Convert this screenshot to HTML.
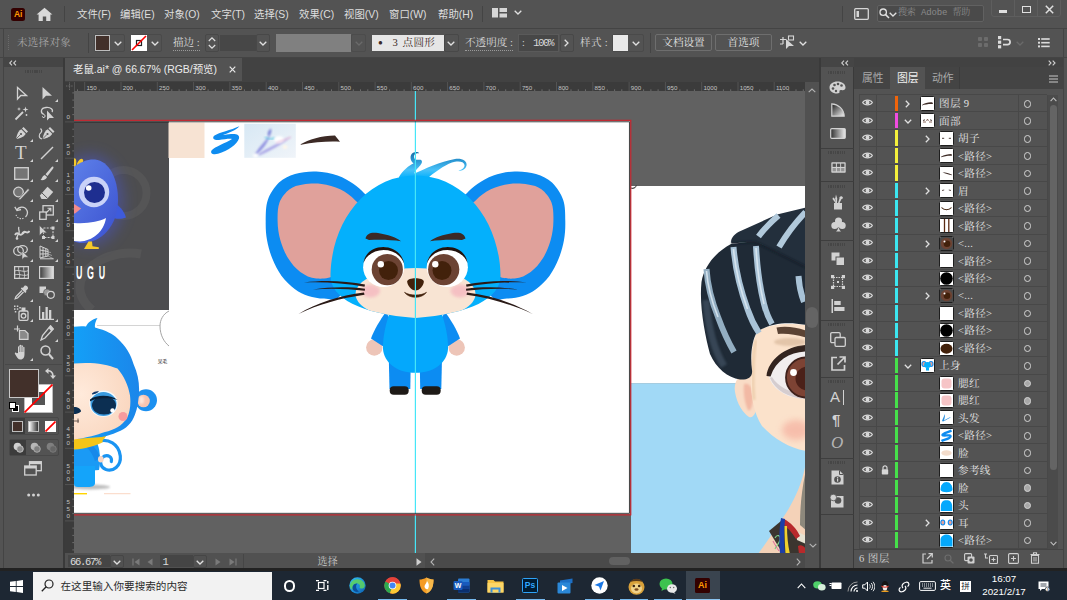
<!DOCTYPE html>
<html lang="zh-CN">
<head>
<meta charset="utf-8">
<title>老鼠.ai</title>
<style>
*{box-sizing:border-box;margin:0;padding:0}
html,body{width:1067px;height:600px;overflow:hidden;background:#535353}
body{font-family:"Liberation Sans","Noto Sans CJK SC",sans-serif;color:#d6d6d6;font-size:11px;position:relative}
.abs{position:absolute}
#app{position:absolute;left:0;top:0;width:1067px;height:571px;background:#535353;overflow:hidden}
#menubar{position:absolute;left:0;top:0;width:1067px;height:28px;background:#535353}
#ctrlbar{position:absolute;left:4px;top:29px;width:1059px;height:28px;background:#535353}
#tabbar{position:absolute;left:65px;top:58px;width:754px;height:24px;background:#424242}
#tab{position:absolute;left:0;top:0;width:177px;height:23px;background:#535353}
#hruler{position:absolute;left:65px;top:82px;width:740px;height:9px;background:#3b3b3b;overflow:hidden}
#vruler{position:absolute;left:65px;top:91px;width:9px;height:462px;background:#3b3b3b}
#canvas{position:absolute;left:74px;top:91px;width:731px;height:462px;background:#616161;overflow:hidden}
#vscroll{position:absolute;left:805px;top:82px;width:14px;height:471px;background:#515151}
#statusbar{position:absolute;left:65px;top:553px;width:754px;height:15px;background:#515151}
#toolbar{position:absolute;left:4px;top:58px;width:59px;height:510px;background:#535353}
#iconstrip{position:absolute;left:821px;top:58px;width:32px;height:511px;background:#535353}
#panel{position:absolute;left:854px;top:58px;width:209px;height:511px;background:#535353}
#taskbar{position:absolute;left:0;top:571px;width:1067px;height:29px;background:#1d2733}

.mi{position:absolute;top:7.600px;height:14px;line-height:14px;font-size:10.4px;color:#dedede;white-space:nowrap}
.sep{position:absolute;width:1px;background:#444}
.serif{font-family:"Liberation Serif","Noto Serif CJK SC",serif}
.ct{position:absolute;top:7px;height:14px;line-height:14px;font-size:10.6px;color:#d8d8d8;white-space:nowrap;font-family:"Liberation Serif","Noto Serif CJK SC",serif}
.chev{position:absolute;width:7px;height:4px}
.dd{position:absolute;top:5px;height:18px;border:1px solid #484848;border-radius:2px}

#panel .row{position:absolute;left:5px;width:188px;height:17.470px;border-bottom:1px solid #484848}
#panel .eye{position:absolute;left:3px;top:4.400px}
#panel .cb{position:absolute;left:36px;top:0.500px;width:3px;height:15.500px}
#panel .th{position:absolute;top:1px;width:15px;height:15px;background:#fff;border:1px solid #1e1e1e;border-radius:1.500px;overflow:hidden}
#panel .nm{position:absolute;top:2.300px;height:14px;line-height:14px;font-size:10.600px;color:#e4e4e4;white-space:nowrap;font-family:"Liberation Serif","Noto Serif CJK SC",serif;letter-spacing:0.300px}
#panel .tg{position:absolute;left:164.800px;top:5px;width:7.600px;height:7.600px;border:1.200px solid #d4d4d4;border-radius:50%}
#panel .tg.f{background:#a8a8a8}
#panel .cv{position:absolute;top:5px}
</style>
</head>
<body>
<div id="app">
  <div class="abs" style="left:0;top:28px;width:1067px;height:1px;background:#444"></div>
  <div class="abs" style="left:0;top:57px;width:1067px;height:1px;background:#444"></div>
  <div class="abs" style="left:3px;top:28px;width:1px;height:543px;background:#444"></div>
  <div class="abs" style="left:1063px;top:28px;width:1px;height:543px;background:#444"></div>

  <div id="menubar">
    <div class="abs" style="left:11px;top:8px;width:14px;height:13px;background:#300;border-radius:2.5px;color:#ff9a00;font-size:8.5px;font-weight:bold;line-height:13px;text-align:center;letter-spacing:-0.3px">Ai</div>
    <svg class="abs" style="left:36px;top:7px" width="17" height="15" viewBox="0 0 17 15"><path d="M8.5 0.8 L0.6 7.6 L2.6 7.6 L2.6 14 L6.8 14 L6.8 9.6 L10.2 9.6 L10.2 14 L14.4 14 L14.4 7.6 L16.4 7.6 Z" fill="#d9d9d9"/></svg>
    <div class="sep" style="left:64px;top:6px;height:16px"></div>
    <div class="mi" style="left:77px">文件(F)</div>
    <div class="mi" style="left:120px">编辑(E)</div>
    <div class="mi" style="left:164px">对象(O)</div>
    <div class="mi" style="left:211px">文字(T)</div>
    <div class="mi" style="left:254px">选择(S)</div>
    <div class="mi" style="left:299px">效果(C)</div>
    <div class="mi" style="left:344px">视图(V)</div>
    <div class="mi" style="left:389px">窗口(W)</div>
    <div class="mi" style="left:438px">帮助(H)</div>
    <div class="sep" style="left:482px;top:6px;height:16px"></div>
    <svg class="abs" style="left:492px;top:8px" width="16" height="10" viewBox="0 0 16 10"><rect x="0" y="0" width="6" height="9.5" fill="#d6d6d6"/><rect x="7.5" y="0" width="7.5" height="4" fill="#d6d6d6"/><rect x="7.5" y="5.5" width="7.5" height="4" fill="#d6d6d6"/></svg>
    <svg class="abs" style="left:514px;top:10px" width="8" height="5" viewBox="0 0 8 5"><path d="M0.7 0.7 L4 4 L7.3 0.7" fill="none" stroke="#e0e0e0" stroke-width="1.3"/></svg>
    <div class="sep" style="left:842px;top:6px;height:16px"></div>
    <svg class="abs" style="left:854px;top:8px" width="15" height="12" viewBox="0 0 15 12"><rect x="0.7" y="0.7" width="13.6" height="10.6" rx="1" fill="none" stroke="#d6d6d6" stroke-width="1.3"/><rect x="2.5" y="3" width="2.5" height="6" fill="#d6d6d6"/></svg>
    <div class="abs" style="left:877px;top:5px;width:107px;height:17px;background:#4a4a4a;border:1px solid #616161;border-radius:2px"></div>
    <svg class="abs" style="left:879px;top:8px" width="11" height="11" viewBox="0 0 11 11"><circle cx="4.2" cy="4.2" r="3.2" fill="none" stroke="#e0e0e0" stroke-width="1.3"/><path d="M6.6 6.6 L10 10" stroke="#e0e0e0" stroke-width="1.5"/></svg>
    <svg class="abs" style="left:889px;top:12px" width="8" height="5" viewBox="0 0 8 5"><path d="M0.7 0.7 L4 4 L7.3 0.7" fill="none" stroke="#e0e0e0" stroke-width="1.3"/></svg>
    <div class="abs" style="left:898px;top:6px;height:14px;line-height:14px;font-size:9px;color:#8a8a8a;white-space:nowrap;font-family:'Liberation Mono','Noto Serif CJK SC',monospace;letter-spacing:-0.150px">搜索 Adobe 帮助</div>
    <div class="abs" style="left:991px;top:-2px;width:70px;height:19px;border:1px solid #5e5e5e;border-radius:3px"></div>
    <div class="abs" style="left:1014px;top:0;width:1px;height:16px;background:#5e5e5e"></div>
    <div class="abs" style="left:1037px;top:0;width:1px;height:16px;background:#5e5e5e"></div>
    <div class="abs" style="left:999px;top:10px;width:8px;height:2.5px;background:#e0e0e0"></div>
    <div class="abs" style="left:1022px;top:6px;width:9px;height:7px;border:1.6px solid #e0e0e0"></div>
    <svg class="abs" style="left:1045px;top:5px" width="9" height="9" viewBox="0 0 9 9"><path d="M0.8 0.8 L8.2 8.2 M8.2 0.8 L0.8 8.2" stroke="#e0e0e0" stroke-width="1.5"/></svg>
  </div>

  <div id="ctrlbar">
    <div class="abs" style="left:4px;top:6px;width:1px;height:15px;border-left:1px dotted #6a6a6a"></div>
    <div class="ct" style="left:13px;color:#a6a6a6;letter-spacing:0.2px">未选择对象</div>
    <div class="sep" style="left:84px;top:4px;height:20px"></div>
    <div class="abs" style="left:90px;top:5px;width:31px;height:18px;border:1px solid #4a4a4a;border-radius:2px"></div>
    <div class="abs" style="left:91px;top:6px;width:15px;height:16px;background:#42302a;border:1px solid #bdbdbd"></div>
    <svg class="abs" style="left:110px;top:12px" width="8" height="5" viewBox="0 0 8 5"><path d="M0.7 0.7 L4 4 L7.3 0.7" fill="none" stroke="#e0e0e0" stroke-width="1.3"/></svg>
    <div class="abs" style="left:127px;top:5px;width:31px;height:18px;border:1px solid #4a4a4a;border-radius:2px"></div>
    <svg class="abs" style="left:127px;top:6px" width="16" height="16" viewBox="0 0 16 16"><rect width="16" height="16" fill="#fff"/><rect x="5.5" y="5.5" width="5" height="5" fill="none" stroke="#222" stroke-width="1.2"/><path d="M1 15 L15 1" stroke="#f00" stroke-width="1.6"/></svg>
    <svg class="abs" style="left:147px;top:12px" width="8" height="5" viewBox="0 0 8 5"><path d="M0.7 0.7 L4 4 L7.3 0.7" fill="none" stroke="#e0e0e0" stroke-width="1.3"/></svg>
    <div class="ct" style="left:169px;border-bottom:1px dotted #9a9a9a;height:15px">描边 :</div>
    <div class="abs" style="left:201px;top:5px;width:14px;height:18px;border:1px solid #484848;border-radius:2px"></div>
    <svg class="abs" style="left:204px;top:8px" width="8" height="12" viewBox="0 0 8 12"><path d="M0.8 4 L4 0.9 L7.2 4 M0.8 8 L4 11.1 L7.2 8" fill="none" stroke="#e0e0e0" stroke-width="1.2"/></svg>
    <div class="abs" style="left:216px;top:6px;width:36px;height:16px;background:#474747"></div>
    <div class="abs" style="left:252px;top:5px;width:14px;height:18px;border:1px solid #484848;border-radius:2px"></div>
    <svg class="abs" style="left:255px;top:12px" width="8" height="5" viewBox="0 0 8 5"><path d="M0.7 0.7 L4 4 L7.3 0.7" fill="none" stroke="#e0e0e0" stroke-width="1.3"/></svg>
    <div class="abs" style="left:272px;top:5px;width:75px;height:18px;background:#808080"></div>
    <div class="abs" style="left:347px;top:5px;width:15px;height:18px;border:1px solid #4c4c4c;border-radius:2px"></div>
    <svg class="abs" style="left:351px;top:12px" width="8" height="5" viewBox="0 0 8 5"><path d="M0.7 0.7 L4 4 L7.3 0.7" fill="none" stroke="#6a6a6a" stroke-width="1.3"/></svg>
    <div class="abs" style="left:368px;top:6px;width:72px;height:16px;background:#e6e6e6"></div>
    <div class="ct" style="left:374px;color:#3a2a25"><span style="font-size:8px;position:relative;top:-1px">●</span></div><div class="ct" style="left:388.500px;color:#3a2a25">3</div><div class="ct" style="left:398.500px;color:#3a2a25;letter-spacing:0.300px">点圆形</div>
    <div class="abs" style="left:440px;top:5px;width:15px;height:18px;border:1px solid #484848;border-radius:2px"></div>
    <svg class="abs" style="left:443px;top:12px" width="8" height="5" viewBox="0 0 8 5"><path d="M0.7 0.7 L4 4 L7.3 0.7" fill="none" stroke="#e0e0e0" stroke-width="1.3"/></svg>
    <div class="ct" style="left:461px;border-bottom:1px dotted #9a9a9a;height:15px">不透明度 :</div>
    <div class="abs" style="left:514px;top:5px;width:41px;height:18px;background:#474747;border:1px solid #5a5a5a"></div>
    <div class="ct" style="left:518px;font-size:10px">:</div>
    <div class="ct" style="left:529px;font-size:10.800px;font-family:'Liberation Mono',monospace;letter-spacing:-1.500px">100%</div>
    <div class="abs" style="left:556px;top:5px;width:14px;height:18px;border:1px solid #484848;border-radius:2px"></div>
    <svg class="abs" style="left:560px;top:10px" width="5" height="8" viewBox="0 0 5 8"><path d="M0.7 0.7 L4 4 L0.7 7.3" fill="none" stroke="#e0e0e0" stroke-width="1.3"/></svg>
    <div class="ct" style="left:576px;letter-spacing:0.3px">样式 :</div>
    <div class="abs" style="left:608px;top:5px;width:32px;height:18px;border:1px solid #4a4a4a;border-radius:2px"></div>
    <div class="abs" style="left:609px;top:6px;width:15px;height:16px;background:#e9e9e9"></div>
    <svg class="abs" style="left:628px;top:12px" width="8" height="5" viewBox="0 0 8 5"><path d="M0.7 0.7 L4 4 L7.3 0.7" fill="none" stroke="#e0e0e0" stroke-width="1.3"/></svg>
    <div class="sep" style="left:646px;top:4px;height:20px"></div>
    <div class="abs serif" style="left:651px;top:5px;width:57px;height:17px;border:1px solid #6e6e6e;border-radius:2px;text-align:center;line-height:15px;font-size:10.6px;color:#e4e4e4">文档设置</div>
    <div class="abs serif" style="left:711px;top:5px;width:57px;height:17px;border:1px solid #6e6e6e;border-radius:2px;text-align:center;line-height:15px;font-size:10.6px;color:#e4e4e4">首选项</div>
    <svg class="abs" style="left:776px;top:6px" width="16" height="15" viewBox="0 0 16 15"><path d="M0 4.5 H6 M3 2 V9 M0 9 H3" stroke="#d6d6d6" stroke-width="1.2" fill="none"/><rect x="8.5" y="1" width="5" height="4" fill="none" stroke="#d6d6d6" stroke-width="1.1"/><path d="M6 4 L6 14 L9 11 L14 11 Z" fill="#d6d6d6"/></svg>
    <svg class="abs" style="left:795px;top:12px" width="8" height="5" viewBox="0 0 8 5"><path d="M0.7 0.7 L4 4 L7.3 0.7" fill="none" stroke="#e0e0e0" stroke-width="1.3"/></svg>
    <svg class="abs" style="left:974px;top:8px" width="11" height="11" viewBox="0 0 11 11"><g fill="#6c6c6c"><rect x="0" y="0" width="4" height="4" rx="1"/><rect x="6" y="0" width="4" height="4" rx="1"/><rect x="0" y="6" width="4" height="4" rx="1"/><rect x="6" y="6" width="4" height="4" rx="1"/></g></svg>
    <svg class="abs" style="left:994px;top:7px" width="14" height="13" viewBox="0 0 14 13"><g fill="#dcdcdc"><rect x="0" y="0" width="3.2" height="3.2"/><rect x="0" y="4.6" width="3.2" height="3.2"/><rect x="0" y="9.2" width="3.2" height="3.2"/></g><path d="M5 3.5 H9.5 A2.6 2.6 0 0 1 9.5 8.7 H5" fill="none" stroke="#dcdcdc" stroke-width="1.7"/></svg>
    <svg class="abs" style="left:1012px;top:12px" width="8" height="5" viewBox="0 0 8 5"><path d="M0.7 0.7 L4 4 L7.3 0.7" fill="none" stroke="#6a6a6a" stroke-width="1.3"/></svg>
    <svg class="abs" style="left:1034px;top:9px" width="12" height="10" viewBox="0 0 12 10"><g fill="#dcdcdc"><rect x="0" y="0" width="2" height="2"/><rect x="3.2" y="0.2" width="8.5" height="1.6"/><rect x="0" y="3.7" width="2" height="2"/><rect x="3.2" y="3.9" width="8.5" height="1.6"/><rect x="0" y="7.4" width="2" height="2"/><rect x="3.2" y="7.6" width="8.5" height="1.6"/></g></svg>
  </div>
  <div id="toolbar">
    <div class="abs" style="left:0;top:0;width:59px;height:9px;background:#454545"></div>
    <svg class="abs" style="left:5px;top:2px" width="9" height="6" viewBox="0 0 9 6"><path d="M3 0.700 L0.700 3 L3 5.300 M7 0.700 L4.700 3 L7 5.300" fill="none" stroke="#d0d0d0" stroke-width="1.100"/></svg>
    <div class="abs" style="left:21px;top:12px;width:17px;height:3px;background:repeating-linear-gradient(90deg,#464646 0 1.300px,transparent 1.300px 2.300px)"></div>
    <svg class="abs" style="left:11.5px;top:27.8px" width="12" height="15" viewBox="0 0 12 15"><path d="M1.500 1.500 L1.500 13 L4.800 9.500 L10.500 9.500 Z" fill="none" stroke="#d2d2d2" stroke-width="1.300" stroke-linejoin="miter"/></svg>
    <svg class="abs" style="left:36.5px;top:27.8px" width="12" height="15" viewBox="0 0 12 15"><path d="M1.500 1 L1.500 13.500 L5 9.800 L11 9.800 Z" fill="#d2d2d2"/></svg>
    <svg class="abs" style="left:50.5px;top:41.3px" width="3" height="3" viewBox="0 0 3 3"><path d="M3 0 V3 H0 Z" fill="#d2d2d2"/></svg>
    <svg class="abs" style="left:10.0px;top:47.7px" width="15" height="15" viewBox="0 0 15 15"><path d="M1.500 13.500 L9 6" stroke="#d2d2d2" stroke-width="1.800" fill="none"/><path d="M11.500 0.500 L12.200 2.800 L14.500 3.500 L12.200 4.200 L11.500 6.500 L10.800 4.200 L8.500 3.500 L10.800 2.800 Z" fill="#d2d2d2"/><path d="M5 1 L5.500 2.500 L7 3 L5.500 3.500 L5 5 L4.500 3.500 L3 3 L4.500 2.500 Z" fill="#d2d2d2"/><circle cx="12.500" cy="9" r="0.900" fill="#d2d2d2"/></svg>
    <svg class="abs" style="left:34.5px;top:47.7px" width="16" height="15" viewBox="0 0 16 15"><path d="M5 8.500 C 1 7, 1.500 2, 7 1.500 C 12 1, 14.500 4, 13 6" fill="none" stroke="#d2d2d2" stroke-width="1.300"/><path d="M5 8.500 C 6.500 9, 6.500 11, 5 11.500 C 3.500 12, 3 10.500, 4 10" fill="none" stroke="#d2d2d2" stroke-width="1"/><path d="M8 4.500 L8 14.500 L10.500 12 L15 12 Z" fill="#d2d2d2"/></svg>
    <svg class="abs" style="left:10.5px;top:68.2px" width="14" height="14" viewBox="0 0 14 14"><path d="M8.500 1 L13 5.500 L11.500 7 L7 2.500 Z" fill="#d2d2d2"/><path d="M6.300 3.300 L10.700 7.700 C 9.500 10.500, 6 12, 1 13 C 2 8, 3.500 4.500, 6.300 3.300 Z" fill="#d2d2d2"/><circle cx="6" cy="8" r="1.100" fill="#535353"/><path d="M1 13 L5.300 8.700" stroke="#535353" stroke-width="0.800"/></svg>
    <svg class="abs" style="left:25.5px;top:81.2px" width="3" height="3" viewBox="0 0 3 3"><path d="M3 0 V3 H0 Z" fill="#d2d2d2"/></svg>
    <svg class="abs" style="left:34.0px;top:68.2px" width="17" height="14" viewBox="0 0 17 14"><g transform="translate(3.500,0)"><path d="M8.500 1 L13 5.500 L11.500 7 L7 2.500 Z" fill="#d2d2d2"/><path d="M6.300 3.300 L10.700 7.700 C 9.500 10.500, 6 12, 1 13 C 2 8, 3.500 4.500, 6.300 3.300 Z" fill="#d2d2d2"/><circle cx="6" cy="8" r="1.100" fill="#535353"/><path d="M1 13 L5.300 8.700" stroke="#535353" stroke-width="0.800"/></g><path d="M4 13 C 0 12, 1 8, 3 6.500 C 4.500 5, 3 3, 2.500 2.500" fill="none" stroke="#d2d2d2" stroke-width="1.100"/></svg>
    <div class="abs" style="left:11.0px;top:85.09px;font-family:'Liberation Serif',serif;font-size:19px;line-height:20px;color:#d2d2d2">T</div>
    <svg class="abs" style="left:25.5px;top:101.1px" width="3" height="3" viewBox="0 0 3 3"><path d="M3 0 V3 H0 Z" fill="#d2d2d2"/></svg>
    <svg class="abs" style="left:35.5px;top:88.1px" width="14" height="14" viewBox="0 0 14 14"><path d="M1 13 L13 1" stroke="#d2d2d2" stroke-width="1.500"/></svg>
    <svg class="abs" style="left:50.5px;top:101.1px" width="3" height="3" viewBox="0 0 3 3"><path d="M3 0 V3 H0 Z" fill="#d2d2d2"/></svg>
    <svg class="abs" style="left:10.0px;top:108.5px" width="15" height="13" viewBox="0 0 15 13"><rect x="0.700" y="0.700" width="13.600" height="11.600" fill="#747474" stroke="#d2d2d2" stroke-width="1.300"/></svg>
    <svg class="abs" style="left:25.5px;top:121.0px" width="3" height="3" viewBox="0 0 3 3"><path d="M3 0 V3 H0 Z" fill="#d2d2d2"/></svg>
    <svg class="abs" style="left:35.5px;top:107.5px" width="14" height="15" viewBox="0 0 14 15"><path d="M13 0.500 C 13.800 1.200, 13.500 2, 13 2.800 L 7.500 10 L 5.500 8.300 L 11.500 1.200 C 12 0.500, 12.500 0.200, 13 0.500 Z" fill="#d2d2d2"/><path d="M4.800 9 L7 11 C 6.500 13.500, 3.500 14.500, 0.500 14 C 2 13, 2 10, 4.800 9 Z" fill="#d2d2d2"/></svg>
    <svg class="abs" style="left:50.5px;top:121.0px" width="3" height="3" viewBox="0 0 3 3"><path d="M3 0 V3 H0 Z" fill="#d2d2d2"/></svg>
    <svg class="abs" style="left:9.0px;top:127.9px" width="17" height="14" viewBox="0 0 17 14"><circle cx="5.500" cy="6" r="4.800" fill="#747474" stroke="#d2d2d2" stroke-width="1.300"/><path d="M6 12.500 L15 2.500 L16.500 4 L7.500 13.500 L5.500 14 Z" fill="#d2d2d2" stroke="#535353" stroke-width="0.600"/></svg>
    <svg class="abs" style="left:25.5px;top:140.9px" width="3" height="3" viewBox="0 0 3 3"><path d="M3 0 V3 H0 Z" fill="#d2d2d2"/></svg>
    <svg class="abs" style="left:35.0px;top:127.9px" width="15" height="14" viewBox="0 0 15 14"><path d="M8.500 0.800 L14.200 6 L8 13 L2.500 13 L0.800 9.500 Z" fill="#d2d2d2"/><path d="M3 7 L8.500 12.300" stroke="#535353" stroke-width="1"/></svg>
    <svg class="abs" style="left:50.5px;top:140.9px" width="3" height="3" viewBox="0 0 3 3"><path d="M3 0 V3 H0 Z" fill="#d2d2d2"/></svg>
    <svg class="abs" style="left:10.0px;top:147.4px" width="15" height="15" viewBox="0 0 15 15"><path d="M3 5 C 5 1, 11 1, 13 5.500 C 14 8, 13 10.500, 11.500 12" fill="none" stroke="#d2d2d2" stroke-width="1.300"/><path d="M0.800 1.800 L3 5.600 L7 4.500" fill="none" stroke="#d2d2d2" stroke-width="1.300"/><path d="M9.500 13.300 C 6 14.500, 2.500 12.500, 1.800 9" fill="none" stroke="#d2d2d2" stroke-width="1.100" stroke-dasharray="1.300 1.300"/></svg>
    <svg class="abs" style="left:25.5px;top:160.9px" width="3" height="3" viewBox="0 0 3 3"><path d="M3 0 V3 H0 Z" fill="#d2d2d2"/></svg>
    <svg class="abs" style="left:35.0px;top:147.4px" width="15" height="15" viewBox="0 0 15 15"><rect x="4" y="0.700" width="10.300" height="9.300" fill="none" stroke="#d2d2d2" stroke-width="1.300"/><rect x="0.700" y="7" width="6.500" height="7.300" fill="#535353" stroke="#d2d2d2" stroke-width="1.300"/><path d="M7 8 L11.500 3.500 M8.500 3.200 H11.800 V6.500" fill="none" stroke="#d2d2d2" stroke-width="1.100"/></svg>
    <svg class="abs" style="left:50.5px;top:160.9px" width="3" height="3" viewBox="0 0 3 3"><path d="M3 0 V3 H0 Z" fill="#d2d2d2"/></svg>
    <svg class="abs" style="left:9.5px;top:167.8px" width="16" height="14" viewBox="0 0 16 14"><path d="M1 9 C 4 4, 6 12, 9 7 C 11 3.500, 13 9, 15.500 5" fill="none" stroke="#d2d2d2" stroke-width="2"/><path d="M5 1 C 3.500 3, 6 4.500, 5 7 C 4 9.500, 2 11, 3 13" fill="none" stroke="#d2d2d2" stroke-width="1.300"/><circle cx="3" cy="12.500" r="1.300" fill="#d2d2d2"/><circle cx="9" cy="7" r="1.300" fill="#d2d2d2"/></svg>
    <svg class="abs" style="left:25.5px;top:180.8px" width="3" height="3" viewBox="0 0 3 3"><path d="M3 0 V3 H0 Z" fill="#d2d2d2"/></svg>
    <svg class="abs" style="left:34.5px;top:167.3px" width="16" height="15" viewBox="0 0 16 15"><rect x="4.500" y="3" width="9.500" height="9.500" fill="none" stroke="#d2d2d2" stroke-width="1.100" stroke-dasharray="2 1.200"/><g fill="#d2d2d2"><rect x="12.500" y="1.500" width="3" height="3"/><rect x="12.500" y="11" width="3" height="3"/><rect x="3" y="11" width="3" height="3"/></g><path d="M0.500 0.500 L0.500 10.500 L3.300 7.800 L8 7.800 Z" fill="#d2d2d2" stroke="#535353" stroke-width="0.500"/></svg>
    <svg class="abs" style="left:50.5px;top:180.8px" width="3" height="3" viewBox="0 0 3 3"><path d="M3 0 V3 H0 Z" fill="#d2d2d2"/></svg>
    <svg class="abs" style="left:9.0px;top:187.2px" width="17" height="15" viewBox="0 0 17 15"><ellipse cx="5.500" cy="6" rx="4.800" ry="4.300" fill="none" stroke="#d2d2d2" stroke-width="1.300"/><ellipse cx="9.500" cy="4.500" rx="4.800" ry="3.800" fill="none" stroke="#d2d2d2" stroke-width="1.300"/><path d="M9 6 L9 14.500 L11.300 12.200 L15.500 12.200 Z" fill="#d2d2d2" stroke="#535353" stroke-width="0.500"/></svg>
    <svg class="abs" style="left:25.5px;top:200.7px" width="3" height="3" viewBox="0 0 3 3"><path d="M3 0 V3 H0 Z" fill="#d2d2d2"/></svg>
    <svg class="abs" style="left:35.0px;top:187.2px" width="15" height="15" viewBox="0 0 15 15"><path d="M1 1 V13 L9 11 V4.500 Z M1 5 L9 6.500 M1 9 L9 8.800 M4 2.300 V12.200 M6.800 3.500 V11.500" fill="none" stroke="#d2d2d2" stroke-width="1"/><path d="M9 11 L14.500 13.800 M9 9 L13 10.500 M9 7 L12 7.500" stroke="#d2d2d2" stroke-width="0.800" opacity="0.700"/><path d="M1 13.800 H14.500" stroke="#d2d2d2" stroke-width="1"/></svg>
    <svg class="abs" style="left:50.5px;top:200.7px" width="3" height="3" viewBox="0 0 3 3"><path d="M3 0 V3 H0 Z" fill="#d2d2d2"/></svg>
    <svg class="abs" style="left:10.0px;top:208.2px" width="15" height="13" viewBox="0 0 15 13"><rect x="0.600" y="0.600" width="13.800" height="11.800" fill="none" stroke="#d2d2d2" stroke-width="1.300"/><path d="M0.600 5 C 5 3, 10 7, 14.400 4.500 M0.600 9 C 5 7, 10 11, 14.400 8.500 M5 0.600 C 3.500 4, 7 8, 5 12.400 M10 0.600 C 8.500 4, 12 8, 10 12.400" fill="none" stroke="#d2d2d2" stroke-width="0.900"/></svg>
    <svg class="abs" style="left:35.0px;top:208.2px" width="15" height="13" viewBox="0 0 15 13"><defs><linearGradient id="tbg" x1="0" y1="0" x2="1" y2="0"><stop offset="0" stop-color="#3a3a3a"/><stop offset="1" stop-color="#e6e6e6"/></linearGradient></defs><rect x="0.600" y="0.600" width="13.800" height="11.800" fill="url(#tbg)" stroke="#d2d2d2" stroke-width="1.200"/></svg>
    <svg class="abs" style="left:10.0px;top:227.1px" width="15" height="15" viewBox="0 0 15 15"><path d="M10.500 0.800 C 12 -0.300, 14.800 2, 13.800 4 L 11.800 6 L 12.500 6.800 L 11.300 8 L 6.800 3.500 L 8 2.300 L 8.800 3 Z" fill="#d2d2d2"/><path d="M8 5.500 L2 11.500 L1.200 13.800 L3.500 13 L9.500 7" fill="none" stroke="#d2d2d2" stroke-width="1.300"/></svg>
    <svg class="abs" style="left:25.5px;top:240.6px" width="3" height="3" viewBox="0 0 3 3"><path d="M3 0 V3 H0 Z" fill="#d2d2d2"/></svg>
    <svg class="abs" style="left:34.5px;top:228.1px" width="16" height="13" viewBox="0 0 16 13"><rect x="0.500" y="0.500" width="6.500" height="6.500" fill="#d2d2d2"/><circle cx="8" cy="6.500" r="3.500" fill="#9a9a9a" stroke="#535353" stroke-width="0.600"/><circle cx="11.800" cy="8.800" r="3.500" fill="#535353" stroke="#d2d2d2" stroke-width="1.200"/></svg>
    <svg class="abs" style="left:10.0px;top:246.5px" width="15" height="16" viewBox="0 0 15 16"><rect x="5" y="6" width="9" height="9.300" rx="1.200" fill="none" stroke="#d2d2d2" stroke-width="1.300"/><rect x="7.500" y="2.500" width="4" height="3.500" fill="#d2d2d2"/><circle cx="9.500" cy="10.800" r="2.300" fill="none" stroke="#d2d2d2" stroke-width="1.300"/><g fill="#d2d2d2"><rect x="0" y="0.500" width="1.500" height="1.500"/><rect x="2.800" y="0.500" width="1.500" height="1.500"/><rect x="0" y="3.300" width="1.500" height="1.500"/><rect x="2.800" y="3.300" width="1.500" height="1.500"/><rect x="5.300" y="2" width="1.500" height="1.500"/><rect x="0.800" y="6" width="1.500" height="1.500"/></g></svg>
    <svg class="abs" style="left:25.5px;top:260.5px" width="3" height="3" viewBox="0 0 3 3"><path d="M3 0 V3 H0 Z" fill="#d2d2d2"/></svg>
    <svg class="abs" style="left:35.0px;top:247.5px" width="15" height="14" viewBox="0 0 15 14"><path d="M0.600 0 V13.400 H15" fill="none" stroke="#d2d2d2" stroke-width="1.300"/><g fill="#d2d2d2"><rect x="3" y="6" width="2.300" height="7"/><rect x="6.500" y="1" width="2.300" height="12"/><rect x="10" y="4" width="2.300" height="9"/></g></svg>
    <svg class="abs" style="left:50.5px;top:260.5px" width="3" height="3" viewBox="0 0 3 3"><path d="M3 0 V3 H0 Z" fill="#d2d2d2"/></svg>
    <svg class="abs" style="left:10.0px;top:267.0px" width="15" height="15" viewBox="0 0 15 15"><path d="M0 4 H6 M3.500 0.500 V6.500" stroke="#d2d2d2" stroke-width="1.200"/><path d="M5.500 5.500 H11 L14 8.500 V14.300 H5.500 Z" fill="#8a8a8a" stroke="#d2d2d2" stroke-width="1.200"/></svg>
    <svg class="abs" style="left:35.5px;top:266.5px" width="14" height="16" viewBox="0 0 14 16"><path d="M10.500 0.800 L13.300 4 L5 13 L1 15 L2.500 10.500 Z" fill="none" stroke="#d2d2d2" stroke-width="1.300"/><path d="M8.500 3 L11.300 6.200 L13.300 4 L10.500 0.800 Z" fill="#d2d2d2"/></svg>
    <svg class="abs" style="left:50.5px;top:280.5px" width="3" height="3" viewBox="0 0 3 3"><path d="M3 0 V3 H0 Z" fill="#d2d2d2"/></svg>
    <svg class="abs" style="left:10.0px;top:286.4px" width="15" height="16" viewBox="0 0 15 16"><path d="M4 9 V3 C 4 2, 5.500 2, 5.500 3 V7 V1.500 C 5.500 0.500, 7.200 0.500, 7.200 1.500 V7 V2 C 7.200 1, 8.900 1, 8.900 2 V7.500 V3.500 C 8.900 2.500, 10.500 2.500, 10.500 3.500 V10 C 10.500 13, 9.500 15.500, 6.500 15.500 C 4 15.500, 3 13.500, 1 10 C 0.300 8.500, 2 8, 2.800 9.300 Z" fill="#d2d2d2"/><path d="M5.500 3 V8 M7.200 2 V8 M8.900 3 V8" stroke="#535353" stroke-width="0.500"/></svg>
    <svg class="abs" style="left:25.5px;top:300.4px" width="3" height="3" viewBox="0 0 3 3"><path d="M3 0 V3 H0 Z" fill="#d2d2d2"/></svg>
    <svg class="abs" style="left:35.5px;top:286.9px" width="14" height="15" viewBox="0 0 14 15"><circle cx="5.500" cy="5.500" r="4.500" fill="none" stroke="#d2d2d2" stroke-width="1.500"/><path d="M8.800 9 L13 14" stroke="#d2d2d2" stroke-width="2"/></svg>
    <div class="abs" style="left:1px;top:306px;width:57px;height:1px;background:#484848"></div>
    <div class="abs" style="left:20px;top:326px;width:29px;height:29px;background:#fff;border:1px solid #bdbdbd"></div>
    <div class="abs" style="left:28px;top:334px;width:13px;height:13px;background:#555"></div>
    <svg class="abs" style="left:20px;top:326px" width="29" height="29" viewBox="0 0 29 29"><path d="M0.500 28.500 L28.500 0.500" stroke="#f00" stroke-width="1.700"/></svg>
    <div class="abs" style="left:5px;top:311px;width:30px;height:29px;background:#42302a;border:1px solid #c8c8c8"></div>
    <svg class="abs" style="left:41px;top:310px" width="11" height="11" viewBox="0 0 11 11"><path d="M1.500 3 C 5 2, 8 4, 8 8" fill="none" stroke="#d2d2d2" stroke-width="1.700"/><path d="M0 3 L3.500 0 V6 Z M8 11 L5 7.500 H11 Z" fill="#d2d2d2"/></svg>
    <svg class="abs" style="left:5px;top:344px" width="10" height="10" viewBox="0 0 10 10"><rect x="3.500" y="3.500" width="6" height="6" fill="#000" stroke="#fff" stroke-width="1"/><rect x="0.500" y="0.500" width="6" height="6" fill="#fff" stroke="#000" stroke-width="1"/></svg>
    <div class="abs" style="left:5px;top:359px;width:50px;height:18px;border:1px solid #484848;border-radius:2px"></div>
    <div class="abs" style="left:6px;top:360px;width:15px;height:16px;background:#3c3c3c"></div>
    <div class="abs" style="left:8px;top:363px;width:11px;height:11px;background:#42302a;border:1px solid #bdbdbd"></div>
    <div class="abs" style="left:24px;top:363px;width:11px;height:11px;background:linear-gradient(90deg,#fff,#333);border:1px solid #bdbdbd"></div>
    <svg class="abs" style="left:41px;top:363px" width="11" height="11" viewBox="0 0 11 11"><rect width="11" height="11" fill="#fff"/><path d="M0.500 10.500 L10.500 0.500" stroke="#f00" stroke-width="1.700"/></svg>
    <div class="abs" style="left:5px;top:381px;width:50px;height:17px;border:1px solid #484848;border-radius:2px"></div>
    <div class="abs" style="left:6px;top:382px;width:16px;height:15px;background:#3c3c3c"></div>
    <svg class="abs" style="left:9px;top:384px;opacity:1" width="11" height="11" viewBox="0 0 11 11"><circle cx="4.500" cy="4.500" r="3.800" fill="#d2d2d2"/><circle cx="7" cy="7" r="3.300" fill="#8a8a8a" stroke="#d2d2d2" stroke-width="0.800"/></svg>
    <svg class="abs" style="left:26px;top:384px;opacity:0.8" width="11" height="11" viewBox="0 0 11 11"><circle cx="4.500" cy="4.500" r="3.800" fill="#d2d2d2"/><circle cx="7" cy="7" r="3.300" fill="#8a8a8a" stroke="#d2d2d2" stroke-width="0.800"/></svg>
    <svg class="abs" style="left:42px;top:384px;opacity:0.35" width="11" height="11" viewBox="0 0 11 11"><circle cx="4.500" cy="4.500" r="3.800" fill="#d2d2d2"/><circle cx="7" cy="7" r="3.300" fill="#8a8a8a" stroke="#d2d2d2" stroke-width="0.800"/></svg>
    <svg class="abs" style="left:20px;top:403px" width="18" height="15" viewBox="0 0 18 15"><rect x="5.500" y="0.700" width="11.800" height="9" fill="none" stroke="#d2d2d2" stroke-width="1.300"/><rect x="5.500" y="0.700" width="11.800" height="2.500" fill="#d2d2d2"/><rect x="0.700" y="5" width="11.500" height="9" fill="#535353" stroke="#d2d2d2" stroke-width="1.300"/><rect x="0.700" y="5" width="11.500" height="2.500" fill="#d2d2d2"/></svg>
    <svg class="abs" style="left:23px;top:435px" width="13" height="4" viewBox="0 0 13 4"><circle cx="1.700" cy="2" r="1.500" fill="#d2d2d2"/><circle cx="6.500" cy="2" r="1.500" fill="#d2d2d2"/><circle cx="11.300" cy="2" r="1.500" fill="#d2d2d2"/></svg>
  </div>
  <div id="tabbar"><div id="tab"><div class="abs" style="left:8px;top:4px;height:15px;line-height:15px;font-size:10.450px;color:#ececec;white-space:nowrap" id="tabtxt">老鼠.ai* @ 66.67% (RGB/预览)</div><svg class="abs" style="left:164px;top:8px" width="7" height="7" viewBox="0 0 7 7"><path d="M0.700 0.700 L6.300 6.300 M6.300 0.700 L0.700 6.300" stroke="#e8e8e8" stroke-width="1.200"/></svg></div></div>
  <div class="abs" style="left:63px;top:58px;width:2px;height:513px;background:#3a3a3a"></div>
  <div class="abs" style="left:819px;top:58px;width:2px;height:513px;background:#3a3a3a"></div>
  <div class="abs" style="left:853px;top:58px;width:1px;height:513px;background:#3a3a3a"></div>
  <div id="hruler"><svg class="abs" style="left:0;top:-1px" width="740" height="10" viewBox="65 81 740 10"><path d="M84.7 81.500 V91 M121.0 81.500 V91 M157.3 81.500 V91 M193.6 81.500 V91 M229.9 81.500 V91 M266.2 81.500 V91 M302.5 81.500 V91 M338.8 81.500 V91 M375.1 81.500 V91 M411.3 81.500 V91 M447.6 81.500 V91 M483.9 81.500 V91 M520.2 81.500 V91 M556.5 81.500 V91 M592.8 81.500 V91 M629.1 81.500 V91 M665.4 81.500 V91 M701.7 81.500 V91 M738.0 81.500 V91 M774.2 81.500 V91" stroke="#575757" stroke-width="0.900" fill="none"/><path d="M77.5 89.300 V91 M92.0 89.300 V91 M99.2 89.300 V91 M106.5 89.300 V91 M113.8 89.300 V91 M128.3 89.300 V91 M135.5 89.300 V91 M142.8 89.300 V91 M150.1 89.300 V91 M164.6 89.300 V91 M171.8 89.300 V91 M179.1 89.300 V91 M186.3 89.300 V91 M200.9 89.300 V91 M208.1 89.300 V91 M215.4 89.300 V91 M222.6 89.300 V91 M237.1 89.300 V91 M244.4 89.300 V91 M251.7 89.300 V91 M258.9 89.300 V91 M273.4 89.300 V91 M280.7 89.300 V91 M288.0 89.300 V91 M295.2 89.300 V91 M309.7 89.300 V91 M317.0 89.300 V91 M324.2 89.300 V91 M331.5 89.300 V91 M346.0 89.300 V91 M353.3 89.300 V91 M360.5 89.300 V91 M367.8 89.300 V91 M382.3 89.300 V91 M389.6 89.300 V91 M396.8 89.300 V91 M404.1 89.300 V91 M418.6 89.300 V91 M425.9 89.300 V91 M433.1 89.300 V91 M440.4 89.300 V91 M454.9 89.300 V91 M462.1 89.300 V91 M469.4 89.300 V91 M476.7 89.300 V91 M491.2 89.300 V91 M498.4 89.300 V91 M505.7 89.300 V91 M513.0 89.300 V91 M527.5 89.300 V91 M534.7 89.300 V91 M542.0 89.300 V91 M549.2 89.300 V91 M563.8 89.300 V91 M571.0 89.300 V91 M578.3 89.300 V91 M585.5 89.300 V91 M600.0 89.300 V91 M607.3 89.300 V91 M614.6 89.300 V91 M621.8 89.300 V91 M636.3 89.300 V91 M643.6 89.300 V91 M650.9 89.300 V91 M658.1 89.300 V91 M672.6 89.300 V91 M679.9 89.300 V91 M687.1 89.300 V91 M694.4 89.300 V91 M708.9 89.300 V91 M716.2 89.300 V91 M723.4 89.300 V91 M730.7 89.300 V91 M745.2 89.300 V91 M752.5 89.300 V91 M759.7 89.300 V91 M767.0 89.300 V91 M781.5 89.300 V91 M788.8 89.300 V91 M796.0 89.300 V91 M803.3 89.300 V91" stroke="#777" stroke-width="0.800" fill="none"/><path d="M74.500 81 V91" stroke="#575757" stroke-width="0.900"/><path d="M66 86 H73 M69.500 82.500 V90" stroke="#777" stroke-width="0.800" stroke-dasharray="1 0.600"/><text x="86.4" y="90" font-size="6.200" fill="#c2c2c2" font-family="Liberation Sans,sans-serif">150</text><text x="122.7" y="90" font-size="6.200" fill="#c2c2c2" font-family="Liberation Sans,sans-serif">200</text><text x="159.0" y="90" font-size="6.200" fill="#c2c2c2" font-family="Liberation Sans,sans-serif">250</text><text x="195.3" y="90" font-size="6.200" fill="#c2c2c2" font-family="Liberation Sans,sans-serif">300</text><text x="231.6" y="90" font-size="6.200" fill="#c2c2c2" font-family="Liberation Sans,sans-serif">350</text><text x="267.9" y="90" font-size="6.200" fill="#c2c2c2" font-family="Liberation Sans,sans-serif">400</text><text x="304.2" y="90" font-size="6.200" fill="#c2c2c2" font-family="Liberation Sans,sans-serif">450</text><text x="340.5" y="90" font-size="6.200" fill="#c2c2c2" font-family="Liberation Sans,sans-serif">500</text><text x="376.8" y="90" font-size="6.200" fill="#c2c2c2" font-family="Liberation Sans,sans-serif">550</text><text x="413.0" y="90" font-size="6.200" fill="#c2c2c2" font-family="Liberation Sans,sans-serif">600</text><text x="449.3" y="90" font-size="6.200" fill="#c2c2c2" font-family="Liberation Sans,sans-serif">650</text><text x="485.6" y="90" font-size="6.200" fill="#c2c2c2" font-family="Liberation Sans,sans-serif">700</text><text x="521.9" y="90" font-size="6.200" fill="#c2c2c2" font-family="Liberation Sans,sans-serif">750</text><text x="558.2" y="90" font-size="6.200" fill="#c2c2c2" font-family="Liberation Sans,sans-serif">800</text><text x="594.5" y="90" font-size="6.200" fill="#c2c2c2" font-family="Liberation Sans,sans-serif">850</text><text x="630.8" y="90" font-size="6.200" fill="#c2c2c2" font-family="Liberation Sans,sans-serif">900</text><text x="667.1" y="90" font-size="6.200" fill="#c2c2c2" font-family="Liberation Sans,sans-serif">950</text><text x="703.4" y="90" font-size="6.200" fill="#c2c2c2" font-family="Liberation Sans,sans-serif">1000</text><text x="739.7" y="90" font-size="6.200" fill="#c2c2c2" font-family="Liberation Sans,sans-serif">1050</text><text x="775.9" y="90" font-size="6.200" fill="#c2c2c2" font-family="Liberation Sans,sans-serif">1100</text></svg></div>
  <div id="vruler"><svg class="abs" style="left:0;top:0" width="9" height="462" viewBox="65 91 9 462"><path d="M65 121.9 H74 M65 158.2 H74 M65 194.4 H74 M65 230.7 H74 M65 267.0 H74 M65 303.2 H74 M65 339.5 H74 M65 375.8 H74 M65 412.1 H74 M65 448.3 H74 M65 484.6 H74 M65 520.9 H74" stroke="#575757" stroke-width="0.900" fill="none"/><path d="M72.300 92.9 H74 M72.300 100.1 H74 M72.300 107.4 H74 M72.300 114.6 H74 M72.300 129.2 H74 M72.300 136.4 H74 M72.300 143.7 H74 M72.300 150.9 H74 M72.300 165.4 H74 M72.300 172.7 H74 M72.300 179.9 H74 M72.300 187.2 H74 M72.300 201.7 H74 M72.300 208.9 H74 M72.300 216.2 H74 M72.300 223.5 H74 M72.300 238.0 H74 M72.300 245.2 H74 M72.300 252.5 H74 M72.300 259.7 H74 M72.300 274.2 H74 M72.300 281.5 H74 M72.300 288.7 H74 M72.300 296.0 H74 M72.300 310.5 H74 M72.300 317.8 H74 M72.300 325.0 H74 M72.300 332.3 H74 M72.300 346.8 H74 M72.300 354.0 H74 M72.300 361.3 H74 M72.300 368.5 H74 M72.300 383.0 H74 M72.300 390.3 H74 M72.300 397.6 H74 M72.300 404.8 H74 M72.300 419.3 H74 M72.300 426.6 H74 M72.300 433.8 H74 M72.300 441.1 H74 M72.300 455.6 H74 M72.300 462.8 H74 M72.300 470.1 H74 M72.300 477.3 H74 M72.300 491.9 H74 M72.300 499.1 H74 M72.300 506.4 H74 M72.300 513.6 H74 M72.300 528.1 H74 M72.300 535.4 H74 M72.300 542.6 H74 M72.300 549.9 H74" stroke="#777" stroke-width="0.800" fill="none"/><text x="66.400" y="118.5" font-size="6.200" fill="#c2c2c2" font-family="Liberation Sans,sans-serif">0</text><text x="66.400" y="148.0" font-size="6.200" fill="#c2c2c2" font-family="Liberation Sans,sans-serif">5</text><text x="66.400" y="154.8" font-size="6.200" fill="#c2c2c2" font-family="Liberation Sans,sans-serif">0</text><text x="66.400" y="177.4" font-size="6.200" fill="#c2c2c2" font-family="Liberation Sans,sans-serif">1</text><text x="66.400" y="184.2" font-size="6.200" fill="#c2c2c2" font-family="Liberation Sans,sans-serif">0</text><text x="66.400" y="191.0" font-size="6.200" fill="#c2c2c2" font-family="Liberation Sans,sans-serif">0</text><text x="66.400" y="213.7" font-size="6.200" fill="#c2c2c2" font-family="Liberation Sans,sans-serif">1</text><text x="66.400" y="220.5" font-size="6.200" fill="#c2c2c2" font-family="Liberation Sans,sans-serif">5</text><text x="66.400" y="227.3" font-size="6.200" fill="#c2c2c2" font-family="Liberation Sans,sans-serif">0</text><text x="66.400" y="250.0" font-size="6.200" fill="#c2c2c2" font-family="Liberation Sans,sans-serif">2</text><text x="66.400" y="256.8" font-size="6.200" fill="#c2c2c2" font-family="Liberation Sans,sans-serif">0</text><text x="66.400" y="263.6" font-size="6.200" fill="#c2c2c2" font-family="Liberation Sans,sans-serif">0</text><text x="66.400" y="286.2" font-size="6.200" fill="#c2c2c2" font-family="Liberation Sans,sans-serif">2</text><text x="66.400" y="293.1" font-size="6.200" fill="#c2c2c2" font-family="Liberation Sans,sans-serif">5</text><text x="66.400" y="299.9" font-size="6.200" fill="#c2c2c2" font-family="Liberation Sans,sans-serif">0</text><text x="66.400" y="322.5" font-size="6.200" fill="#c2c2c2" font-family="Liberation Sans,sans-serif">3</text><text x="66.400" y="329.3" font-size="6.200" fill="#c2c2c2" font-family="Liberation Sans,sans-serif">0</text><text x="66.400" y="336.1" font-size="6.200" fill="#c2c2c2" font-family="Liberation Sans,sans-serif">0</text><text x="66.400" y="358.8" font-size="6.200" fill="#c2c2c2" font-family="Liberation Sans,sans-serif">3</text><text x="66.400" y="365.6" font-size="6.200" fill="#c2c2c2" font-family="Liberation Sans,sans-serif">5</text><text x="66.400" y="372.4" font-size="6.200" fill="#c2c2c2" font-family="Liberation Sans,sans-serif">0</text><text x="66.400" y="395.1" font-size="6.200" fill="#c2c2c2" font-family="Liberation Sans,sans-serif">4</text><text x="66.400" y="401.9" font-size="6.200" fill="#c2c2c2" font-family="Liberation Sans,sans-serif">0</text><text x="66.400" y="408.7" font-size="6.200" fill="#c2c2c2" font-family="Liberation Sans,sans-serif">0</text><text x="66.400" y="431.3" font-size="6.200" fill="#c2c2c2" font-family="Liberation Sans,sans-serif">4</text><text x="66.400" y="438.1" font-size="6.200" fill="#c2c2c2" font-family="Liberation Sans,sans-serif">5</text><text x="66.400" y="444.9" font-size="6.200" fill="#c2c2c2" font-family="Liberation Sans,sans-serif">0</text><text x="66.400" y="467.6" font-size="6.200" fill="#c2c2c2" font-family="Liberation Sans,sans-serif">5</text><text x="66.400" y="474.4" font-size="6.200" fill="#c2c2c2" font-family="Liberation Sans,sans-serif">0</text><text x="66.400" y="481.2" font-size="6.200" fill="#c2c2c2" font-family="Liberation Sans,sans-serif">0</text><text x="66.400" y="503.9" font-size="6.200" fill="#c2c2c2" font-family="Liberation Sans,sans-serif">5</text><text x="66.400" y="510.7" font-size="6.200" fill="#c2c2c2" font-family="Liberation Sans,sans-serif">5</text><text x="66.400" y="517.5" font-size="6.200" fill="#c2c2c2" font-family="Liberation Sans,sans-serif">0</text></svg></div>
  <div id="canvas">
    <svg class="abs" style="left:0;top:0" width="731" height="462" viewBox="74 91 731 462">
      <defs>
        <clipPath id="headclip"><path id="headpath" d="M415.5 175.500 C 366 175.500, 331.500 222, 330.500 275 C 330 298, 360 314, 415.5 318 C 471 314, 501.500 298, 500.500 275 C 499.500 222, 465 175.500, 415.5 175.500 Z"/></clipPath>
        <linearGradient id="tuftg" gradientUnits="userSpaceOnUse" x1="0" y1="151" x2="0" y2="178"><stop offset="0" stop-color="#14689e"/><stop offset="0.350" stop-color="#2a96d2"/><stop offset="0.700" stop-color="#48c2f9"/><stop offset="1" stop-color="#04b0fc"/></linearGradient>
      </defs>
      <!-- artboard -->
      <rect x="60" y="121" width="570" height="393" fill="#ffffff"/>
      <!-- right image -->
      <g id="rightimg" clip-path="url(#rclip)">
        <rect x="631" y="186" width="174" height="197.500" fill="#ffffff"/>
        <rect x="631" y="383.300" width="174" height="170" fill="#a1d9f6"/>
        <!-- arm / body -->
        <path d="M806 462 C 803 480, 797 495, 788 510 C 780 522, 770 538, 758 554 L 806 554 Z" fill="#f4d2b8"/>
        <path d="M806 470 C 802 488, 800 505, 800 525 L 806 530 Z" fill="#8d887c"/>
        <path d="M769 531 L 781 521 L 806 538 L 806 554 L 783 554 Z" fill="#3b352f"/>
        <path d="M796 531 L 806 536 L 806 544 L 797 540 Z" fill="#e6e2d2"/>
        <path d="M775 538 C 777 534, 781 535, 780 540 C 779 544, 776 546, 775 549" fill="none" stroke="#7fd08a" stroke-width="1.200"/>
        <path d="M773 541 C 775 545, 777 548, 779 551" fill="none" stroke="#e06a9a" stroke-width="1"/>
        <path d="M784 519 C 790 522, 797 529, 800 536 L 796 539 C 792 532, 787 527, 782 524 Z" fill="#b8292b"/>
        <path d="M798 546 C 801 544, 804 546, 806 549 L 806 554 L 799 554 Z" fill="#b8292b"/>
        <path d="M781 518 L 785 519 C 784 530, 784 542, 785 554 L 780 554 C 779 542, 779 530, 781 518 Z" fill="#1d3fa8"/>
        <path d="M784.500 526 L 787 526 C 787 536, 788 546, 790 554 L 785.500 554 C 785 546, 784.500 536, 784.500 526 Z" fill="#f0d02e"/>
        <!-- ear -->
        <path d="M735 392 C 733 380, 741 372, 750 374 C 758 376, 760 390, 758 402 C 757 412, 753 419, 749 417 C 743 413, 737 404, 735 392 Z" fill="#f9dcc6"/>
        <path d="M744 384 C 750 382, 754 390, 753 400 C 752 408, 750 412, 748 410 C 745 404, 743 394, 744 384 Z" fill="#f2b9a4" filter="url(#blur1)"/>
        <!-- face -->
        <path d="M757 332 C 765 326, 780 322, 806 325 L 806 451 C 790 448, 775 440, 762 426 C 753 412, 750 392, 751 372 C 751 356, 752 342, 757 332 Z" fill="#fbe2cb"/>
        <ellipse cx="796" cy="430" rx="14" ry="10" fill="#f6b6a4" opacity="0.8" filter="url(#blur3)"/>
        <path d="M756 340 C 753 355, 752 380, 754 400" fill="none" stroke="#eecfae" stroke-width="3" filter="url(#blur1)"/>
        <!-- eye -->
        <path d="M768 372 C 774 356, 790 348, 806 347 L 806 399 C 790 399, 776 392, 770 380 Z" fill="#f1edee"/>
        <path d="M770 378 C 775 390, 788 398, 806 399 L 806 394 C 790 393, 778 387, 772 377 Z" fill="#c9bfc2" opacity="0.700"/>
        <circle cx="806" cy="377.500" r="20" fill="#7d4334" stroke="#3f211b" stroke-width="1.800"/>
        <circle cx="807.500" cy="378.500" r="12" fill="#4b2119"/>
        <circle cx="793.500" cy="372.500" r="3.400" fill="#ffffff"/>
        <path d="M766.500 376 C 768 360, 786 346, 806 345 L 806 351.500 C 790 352, 776 360, 770.500 376.500 Z" fill="#33241f"/>
        <path d="M776.500 327.500 C 786 325.500, 797 327.500, 806 330.500 L 806 337.500 C 796 334.500, 786 333, 778 334 Z" fill="#5b4334"/>
        <ellipse cx="790" cy="342" rx="16" ry="4" fill="#d9b99c" opacity="0.700" filter="url(#blur1)"/>
        <!-- hat -->
        <path d="M731 244 C 716 252, 704 266, 701.500 282 C 699 305, 705 335, 710 354 C 716 368, 728 378, 740 379.500 C 748 380, 753 377, 752 370 C 750 356, 752 340, 757 332 C 768 324, 786 321, 806 325 L 806 262 L 755 241 Z" fill="#1f2a36"/>
        <path d="M706 300 C 708 325, 714 350, 724 366" fill="none" stroke="#46586a" stroke-width="7" opacity="0.600" filter="url(#blur1)"/>
        <g fill="none" stroke="#a9c3d7" stroke-width="6" stroke-linecap="butt">
          <path d="M733.500 247 C 735 266, 740.500 290, 747.500 309 C 750.500 318, 754.500 326, 759 333"/>
          <path d="M756 246 C 757 265, 760 288, 764 304 C 766 312, 769 319, 772 324"/>
          <path d="M706.500 269 C 707.500 285, 712 302, 718 317 C 722 328, 727 340, 734 352" stroke="#93aec2"/>
          <path d="M798.500 276 C 799 285, 801 294, 804 302"/>
        </g>
        <g fill="none" stroke="#e3eef6" stroke-width="1.600" opacity="0.800">
          <path d="M733.500 249 C 735 266, 740.500 290, 747.500 309"/>
          <path d="M756 248 C 757 265, 760 288, 764 304"/>
          <path d="M706.500 271 C 707.500 285, 712 302, 718 317"/>
        </g>
        <path d="M731.500 243.500 C 729.500 239, 735 233.500, 740 231.300 L 777 214.500 L 806 207.500 L 806 267 C 795 261, 785 256, 777 252.500 C 768 247, 762 243.500, 755 242.500 C 747 241.500, 738 243, 731.500 243.500 Z" fill="#232f3c"/>
        <g fill="none" stroke="#b1c9db" stroke-width="6">
          <path d="M778.500 215.500 C 771 222, 764 229, 758.500 236.500"/>
          <path d="M805.500 212 C 795 223, 786 235, 779 247"/>
        </g>
        <path d="M731 243 L 755 242 L 777 252.500 L 806 267" fill="none" stroke="#111a24" stroke-width="1.600" opacity="0.700" filter="url(#blur1)"/>
      </g>
      <!-- ART_START -->
      <defs>
        <filter id="blur3" x="-30%" y="-30%" width="160%" height="160%"><feGaussianBlur stdDeviation="3"/></filter>
        <filter id="blur6" x="-50%" y="-50%" width="200%" height="200%"><feGaussianBlur stdDeviation="7"/></filter>
        <filter id="blur1b" x="-30%" y="-30%" width="160%" height="160%"><feGaussianBlur stdDeviation="1.600"/></filter>
        <filter id="blur1" x="-30%" y="-30%" width="160%" height="160%"><feGaussianBlur stdDeviation="1"/></filter>
        <clipPath id="darkclip"><rect x="74" y="122" width="95" height="188"/></clipPath>
        <clipPath id="abclip"><rect x="74" y="121" width="556" height="393"/></clipPath>
        <clipPath id="rclip"><rect x="631" y="186" width="174" height="367"/></clipPath>
        <linearGradient id="birdg" x1="0" y1="0" x2="1" y2="1"><stop offset="0" stop-color="#6286ec"/><stop offset="1" stop-color="#3a50cf"/></linearGradient>
        <linearGradient id="lightimg" x1="0" y1="0" x2="1" y2="1"><stop offset="0" stop-color="#d7e8f4"/><stop offset="1" stop-color="#f0f4f9"/></linearGradient>
        <radialGradient id="monkface" cx="0.3" cy="0.4" r="0.8"><stop offset="0" stop-color="#ffeadb"/><stop offset="1" stop-color="#f9d5bd"/></radialGradient>
        <linearGradient id="monkhead" x1="0" y1="0" x2="1" y2="0"><stop offset="0" stop-color="#12a5fa"/><stop offset="1" stop-color="#1b86ea"/></linearGradient>
      </defs>
      <!-- dark bird image -->
      <g clip-path="url(#darkclip)">
        <rect x="74" y="122" width="95" height="188" fill="#4d4d4f"/>
        <circle cx="123.500" cy="193" r="23" fill="none" stroke="#555556" stroke-width="8"/>
        <path d="M141 254 C 120 250, 96 258, 84 274 C 76 286, 80 300, 92 310" fill="none" stroke="#555556" stroke-width="9"/>
        <ellipse cx="90" cy="200" rx="34" ry="46" fill="#4a58ff" opacity="0.330" filter="url(#blur6)"/>
        <ellipse cx="74.500" cy="162.500" rx="1.800" ry="4.200" fill="#f5c92a"/>
        <ellipse cx="80" cy="162.800" rx="2.300" ry="4.400" fill="#f5c92a" transform="rotate(32 80 162.800)"/>
        <path d="M114 203 C 119 205, 124 211, 126 217.500 C 121 219.500, 115 219, 111 217 Z" fill="#3e5bdc"/>
        <path d="M60 200 C 60 172, 80 158.500, 95 159.500 C 109 161, 118 178, 118 200 C 118 226, 101 243, 82 243 C 68 243, 60 230, 60 200 Z" fill="url(#birdg)"/>
        <path d="M60 221 C 80 225, 96 223, 106 218 C 104 232, 92 241, 80 241.500 C 70 241.500, 64 238, 60 232 Z" fill="#ffffff"/>
        <path d="M74 204 L81.200 208.500 L75 213.400 L74 213.400 Z" fill="#f28c8c"/>
        <circle cx="94" cy="192" r="15.200" fill="#c9d2f8"/>
        <circle cx="94.500" cy="192.500" r="10.500" fill="#1e2e90"/>
        <circle cx="88.700" cy="188" r="2.800" fill="#ffffff"/>
        <path d="M84 249 L88.500 241.500 L92 241.500 L92.500 246.300 L98.800 247.300 L98.800 249 Z" fill="#f5c92a"/>
        <text transform="translate(75.900,278.800) scale(0.480,1)" font-family="'Liberation Sans',sans-serif" font-weight="bold" font-size="18.500" letter-spacing="10" fill="#ffffff">UGU</text>
      </g>
      <rect x="74" y="121.500" width="95" height="1" fill="#333"/>
      <!-- swatches row -->
      <rect x="168.500" y="122.500" width="36" height="35.500" fill="#f7e3d3"/>
      <path d="M239.400 126.200 C 231 130, 219 132.500, 214.500 135.500 C 211.500 138, 214 140.500, 219 140 C 224 139.500, 229 138.500, 232 139 C 226 143, 215 146.500, 211.500 150.500 C 210 153.500, 213 155, 218 153.800 C 228 151, 237 144.500, 239 138.500 C 240 134.500, 236 133.500, 231 134 C 228 134.300, 225 135, 223 135 C 229 132.500, 236 130.500, 239.400 126.200 Z" fill="#0e8cf0"/>
      <rect x="244.300" y="123.800" width="51.500" height="34" fill="url(#lightimg)"/>
      <path d="M255 154 C 260 146, 266 140, 270 135 C 268 143, 262 150, 256 155 Z" fill="#8f8fe0" filter="url(#blur1)"/>
      <path d="M258 154 C 268 148, 280 142, 291 137 C 282 144, 270 151, 259 155.500 Z" fill="#a9a4e6" filter="url(#blur1)"/>
      <path d="M268 136 C 267 132, 269 130, 271 128.500 C 272 131, 271 134, 269 136.500 Z" fill="#7f86d8" filter="url(#blur1)"/>
      <path d="M265 137 C 268 139.500, 272 139.500, 275 138" fill="none" stroke="#58c8e0" stroke-width="1.400" filter="url(#blur1)" opacity="0.9"/>
      <ellipse cx="279" cy="139.500" rx="5" ry="3.500" fill="#ffffff" filter="url(#blur1)"/>
      <ellipse cx="285" cy="147" rx="2.500" ry="2" fill="#fff6ea" filter="url(#blur1)"/>
      <ellipse cx="255.500" cy="155.500" rx="2.500" ry="2" fill="#ffffff" filter="url(#blur1)"/>
      <path d="M276 143 C 282 141, 287 139, 291 137" stroke="#e7b4d6" stroke-width="1.200" fill="none" filter="url(#blur1)"/>
      <path d="M300.500 144.300 C 308 139.500, 322 135.500, 335 135.400 L340 141.800 C 330 141, 315 142, 301 144.800 Z" fill="#3c2a25"/>
      <!-- annotation lines -->
      <g clip-path="url(#abclip)">
        <path d="M97 325.500 H160" stroke="#c9c9c9" stroke-width="0.800"/>
        <path d="M169 311 C 163 314, 160 320, 160 326 C 160 335, 164 342, 169 346" fill="none" stroke="#9a9a9a" stroke-width="0.900"/>
        <text x="157.800" y="362.500" font-size="4.800" fill="#333" font-family="'Liberation Sans','Noto Sans CJK SC',sans-serif">呆毛</text>
        <rect x="74" y="493" width="13" height="1.400" fill="#ffd400"/>
        <rect x="104" y="493.200" width="26.500" height="1" fill="#fbd6c2"/>
        <!-- monkey -->
        <ellipse cx="90" cy="487" rx="20" ry="2.600" fill="#8a8a8a" opacity="0.550" filter="url(#blur1)"/>
        <path d="M98 441.500 C 108 438, 119 444, 120.300 456 C 121.300 466, 113 472, 106 469.500 C 99.500 467, 99 459, 104 456.300 C 108 454.300, 112.500 457, 111.300 461.500" fill="none" stroke="#1a94f2" stroke-width="3.200" stroke-linecap="round"/>
        <path d="M74 440 L 96 440 C 100 448, 101 460, 99 470 L 74 472 Z" fill="#1a9af5"/>
        <path d="M74 466 H 95 V 483 C 95 486, 92 487, 88 487 H 78 C 75 487, 74 486, 74 484 Z" fill="#14a4fa"/>
        <path d="M88 442 C 94 446, 99 452, 100 458 L 95 461 C 93 455, 90 450, 86 447 Z" fill="#1789ea"/>
        <ellipse cx="100.800" cy="459.300" rx="2.800" ry="3.300" fill="#f8d5c4"/>
        <path d="M74 437 C 88 437.500, 100 436, 107 434.500 C 105 439, 101 440.500, 103 442 C 96 446, 84 449, 74 449.500 Z" fill="#f5c518"/>
        <circle cx="146" cy="400.300" r="11" fill="#1b90f0"/>
        <circle cx="143.500" cy="401" r="6.300" fill="#f7c4b0"/>
        <ellipse cx="141.500" cy="400" rx="2.500" ry="4" fill="#fdeee4" opacity="0.800" filter="url(#blur1)"/>
        <path d="M60 330 C 68 327.500, 78 325.500, 86 326.500 C 88 322, 92 319.500, 97.500 318 C 95.500 321.500, 94.500 324.500, 95 327.500 C 106 330.500, 113 334, 117.500 338.500 C 126 346, 131 355, 133.500 364 C 138 374, 139.500 383, 139 392.500 C 138.500 401, 137.500 408, 135 414.500 C 132 423, 126 429, 117.500 432 C 112 434.500, 107 436, 101.500 437 L 60 440 Z" fill="url(#monkhead)"/>
        <path d="M60 365.500 C 82 361, 104 362.500, 117.500 368.600 C 124 376, 128.500 386, 130 395.600 C 131 404, 130 412, 127 418 C 122 426, 114 430, 105 432 C 94 436, 82 439, 60 441 Z" fill="url(#monkface)"/>
        <ellipse cx="103.500" cy="403.600" rx="14.200" ry="13.200" fill="#f4fbff"/>
        <ellipse cx="103.500" cy="404" rx="13" ry="12" fill="#3a9be0"/>
        <ellipse cx="104" cy="405.300" rx="12" ry="9.300" fill="#0c2f52"/>
        <path d="M90 399.500 C 96 394.500, 111 394.500, 117.500 400 C 111 397.500, 96 397.500, 90 401.500 Z" fill="#0a2038"/>
        <circle cx="112.500" cy="410.500" r="2.200" fill="#ffffff"/>
        <path d="M92 393.500 C 94 391.500, 97 391, 99 391.500 C 97 393.500, 94 394.500, 92 394.500 Z" fill="#12386a"/>
        <path d="M74 407 C 78 407, 81 409, 81 411.500 C 79 413.500, 76 414, 74 414 Z" fill="#0c2f52"/>
        <path d="M74 421 H79 M78 418.500 V423" stroke="#5a4a44" stroke-width="0.900"/>
        <circle cx="123" cy="416.500" r="4.500" fill="#f89b9e"/>
      </g>
      <!-- ART_END -->
      <path d="M631 188 C 633.500 189, 636 187.500, 636.500 185" fill="none" stroke="#444" stroke-width="1.100"/>
      <!-- MOUSE_START -->
      <g id="mouse">
        <!-- ears -->
        <g id="earL">
          <path d="M265.7 221.3 C265.8 214.6,265.6 206.4,267.8 200.0 C270.0 193.6,274.5 186.9,279.0 182.6 C283.5 178.2,288.8 175.8,295.0 173.9 C301.2 172.1,309.2 171.2,316.3 171.5 C323.4 171.8,331.4 173.4,337.6 175.5 C343.8 177.6,349.2 181.0,353.6 184.0 C358.0 187.0,361.1 189.8,364.2 193.3 C367.3 196.8,372.7 193.9,372.0 205.0 C371.3 216.1,365.3 244.8,360.0 260.0 C354.7 275.2,346.0 289.6,340.0 296.0 C334.0 302.4,329.3 298.5,324.0 298.5 C318.7 298.5,313.1 297.4,308.3 295.9 C303.5 294.3,299.4 292.5,295.0 289.2 C290.6 285.9,285.4 281.0,281.6 275.9 C277.8 270.8,274.7 264.6,272.3 258.6 C269.9 252.6,268.1 246.2,267.0 240.0 C265.9 233.8,265.6 228.0,265.7 221.3 Z" fill="#0c8cf2"/>
          <path d="M277.6 221.3 C277.5 215.1,277.5 207.9,279.5 202.6 C281.5 197.3,285.7 192.3,289.6 189.3 C293.5 186.3,297.7 185.4,303.0 184.5 C308.3 183.6,315.4 183.2,321.6 184.0 C327.8 184.8,334.6 186.6,340.2 189.3 C345.8 192.0,351.3 196.2,354.9 200.0 C358.5 203.8,362.8 203.7,362.0 212.0 C361.2 220.3,354.3 239.7,350.0 250.0 C345.7 260.3,341.6 269.2,336.0 274.0 C330.4 278.8,322.2 278.9,316.3 278.5 C310.4 278.1,305.0 275.2,300.3 271.9 C295.6 268.6,291.6 263.9,288.3 258.6 C285.0 253.3,282.1 246.2,280.3 240.0 C278.5 233.8,277.7 227.5,277.6 221.3 Z" fill="#e0a19b"/>
        </g>
        <g transform="translate(831,0) scale(-1,1)">
          <path d="M265.7 221.3 C265.8 214.6,265.6 206.4,267.8 200.0 C270.0 193.6,274.5 186.9,279.0 182.6 C283.5 178.2,288.8 175.8,295.0 173.9 C301.2 172.1,309.2 171.2,316.3 171.5 C323.4 171.8,331.4 173.4,337.6 175.5 C343.8 177.6,349.2 181.0,353.6 184.0 C358.0 187.0,361.1 189.8,364.2 193.3 C367.3 196.8,372.7 193.9,372.0 205.0 C371.3 216.1,365.3 244.8,360.0 260.0 C354.7 275.2,346.0 289.6,340.0 296.0 C334.0 302.4,329.3 298.5,324.0 298.5 C318.7 298.5,313.1 297.4,308.3 295.9 C303.5 294.3,299.4 292.5,295.0 289.2 C290.6 285.9,285.4 281.0,281.6 275.9 C277.8 270.8,274.7 264.6,272.3 258.6 C269.9 252.6,268.1 246.2,267.0 240.0 C265.9 233.8,265.6 228.0,265.7 221.3 Z" fill="#0c8cf2"/>
          <path d="M277.6 221.3 C277.5 215.1,277.5 207.9,279.5 202.6 C281.5 197.3,285.7 192.3,289.6 189.3 C293.5 186.3,297.7 185.4,303.0 184.5 C308.3 183.6,315.4 183.2,321.6 184.0 C327.8 184.8,334.6 186.6,340.2 189.3 C345.8 192.0,351.3 196.2,354.9 200.0 C358.5 203.8,362.8 203.7,362.0 212.0 C361.2 220.3,354.3 239.7,350.0 250.0 C345.7 260.3,341.6 269.2,336.0 274.0 C330.4 278.8,322.2 278.9,316.3 278.5 C310.4 278.1,305.0 275.2,300.3 271.9 C295.6 268.6,291.6 263.9,288.3 258.6 C285.0 253.3,282.1 246.2,280.3 240.0 C278.5 233.8,277.7 227.5,277.6 221.3 Z" fill="#e0a19b"/>
        </g>
        <!-- body -->
        <circle cx="374.300" cy="347.500" r="8.200" fill="#edc5b8"/>
        <circle cx="456.700" cy="347.500" r="8.200" fill="#edc5b8"/>
        <path d="M386 312 C 380 320, 374 330, 371 338.500 L 384 347 L 396 330 Z" fill="#0c8cf2"/>
        <path d="M445 312 C 451 320, 457 330, 460 338.500 L 447 347 L 435 330 Z" fill="#0c8cf2"/>
        <path d="M388.800 358 H410.800 L410.300 389 H389.500 Z" fill="#0c8cf2"/>
        <path d="M419.700 358 H442 L441.300 389 H420.200 Z" fill="#0c8cf2"/>
        <rect x="389.700" y="386.300" width="19" height="8.400" rx="4" fill="#1e1a17"/>
        <rect x="421.700" y="386.300" width="19" height="8.400" rx="4" fill="#1e1a17"/>
        <path d="M390 312 C 386 322, 382.500 338, 383 349 C 384 362, 396 372.800, 415.500 372.800 C 435 372.800, 447 362, 448 349 C 448.500 338, 445 322, 441 312 Z" fill="#04a8fc"/>
        <!-- hair tuft -->
        <path d="M399 177 C 403 170, 409 165.500, 413.500 163.500 C 410 161, 409.300 155, 413 152.800 C 415.500 151.500, 418.500 151.800, 419.200 153.200 C 416.500 152.800, 413.500 154, 414 157.300 C 414.300 159.800, 417 160, 419.500 159.700 C 422.200 159.500, 422.600 162, 421 164.200 C 419 167.300, 415 170, 414.300 173.600 C 425 169, 440 161.500, 455 159 C 462 158, 467 161, 466.600 165 C 466.300 168.500, 462 171.500, 458.500 170.500 C 462 170, 464.800 167.500, 464.500 165 C 464 162, 460 161, 455 161.800 C 447 163.500, 438 170, 429.500 176.500 L 429.500 181 L 399 181 Z" fill="url(#tuftg)"/>
        <!-- head -->
        <path d="M415.5 175.500 C 366 175.500, 331.500 222, 330.500 275 C 330 298, 360 314, 415.5 318 C 471 314, 501.500 298, 500.500 275 C 499.500 222, 465 175.500, 415.5 175.500 Z" fill="#04b0fc"/>
        <g clip-path="url(#headclip)">
          <ellipse cx="415.500" cy="294" rx="60" ry="26" fill="#f8e4d3"/>
        </g>
        <!-- blush -->
        <ellipse cx="370.500" cy="291" rx="9.500" ry="6.500" fill="#f5bfc3" opacity="0.950" filter="url(#blur1b)"/>
        <ellipse cx="460" cy="291" rx="9.500" ry="6.500" fill="#f5bfc3" opacity="0.950" filter="url(#blur1b)"/>
        <!-- eyes -->
        <g id="eyeL">
          <ellipse cx="383.700" cy="267.200" rx="20.600" ry="19.800" fill="#ffffff"/>
          <path d="M363.500 263 C 366 242, 400 241, 404.300 264 C 398 245.500, 370 245.500, 363.500 263 Z" fill="#20120e"/>
          <circle cx="387.300" cy="269.600" r="15.600" fill="#6c4333"/>
          <circle cx="388.500" cy="270.500" r="9.500" fill="#42210b"/>
          <circle cx="380.800" cy="264.200" r="3.200" fill="#ffffff"/>
        </g>
        <g id="eyeR">
          <ellipse cx="447.300" cy="267.200" rx="20.600" ry="19.800" fill="#ffffff"/>
          <path d="M467.500 263 C 465 242, 431 241, 426.700 264 C 433 245.500, 461 245.500, 467.500 263 Z" fill="#20120e"/>
          <circle cx="443.700" cy="269.600" r="15.600" fill="#6c4333"/>
          <circle cx="442" cy="270.500" r="9.500" fill="#42210b"/>
          <circle cx="435.300" cy="264.200" r="3.200" fill="#ffffff"/>
        </g>
        <!-- eyebrows -->
        <path d="M365.500 238.500 C 366.500 233.500, 371 232, 378 233 C 388 234.500, 396 237.500, 401 241.200 C 392 239.800, 380 239.300, 369 240 Z" fill="#3c2a25"/>
        <path d="M465.500 238.500 C 464.500 233.500, 460 232, 453 233 C 443 234.500, 435 237.500, 430 241.200 C 439 239.800, 451 239.300, 462 240 Z" fill="#3c2a25"/>
        <!-- nose + mouth -->
        <path d="M407.200 281.500 C 407.200 277, 423.800 277, 423.800 281.500 C 423.800 285.500, 419.500 290.500, 415.500 290.500 C 411.500 290.500, 407.200 285.500, 407.200 281.500 Z" fill="#42210b"/>
        <path d="M404.500 292.300 C 409 299, 422 299, 426.500 292.300 C 421 296, 410 296, 404.500 292.300 Z" fill="#42210b" stroke="#42210b" stroke-width="0.600" stroke-linejoin="round"/>
        <!-- whiskers -->
        <g fill="#2a1a16">
          <path d="M365 284.600 C 345 280.500, 322 280, 304 282.500 C 322 281.500, 345 283, 364.500 286.800 Z"/>
          <path d="M365 288.700 C 348 286.500, 330 286.800, 313 289.500 C 330 288.200, 348 288.800, 364.800 290.800 Z"/>
          <path d="M364 292.600 C 340 295.500, 316 303.500, 298.500 314 C 317 305, 341 298, 364.500 294.800 Z"/>
          <path d="M466 284.600 C 486 280.500, 509 280, 527 282.500 C 509 281.500, 486 283, 466.500 286.800 Z"/>
          <path d="M466 288.700 C 483 286.500, 501 286.800, 518 289.500 C 501 288.200, 483 288.800, 466.200 290.800 Z"/>
          <path d="M467 292.600 C 491 295.500, 515 303.500, 532.500 314 C 514 305, 490 298, 466.500 294.800 Z"/>
        </g>
      </g>
      <!-- MOUSE_END -->
      <!-- guide -->
      <rect x="414.800" y="91" width="1.200" height="462" fill="#45e6f7"/>
      <!-- artboard border -->
      <rect x="60" y="121.800" width="569.400" height="391.500" fill="none" stroke="#2a2a2a" stroke-width="0.900"/>
      <rect x="60" y="120.300" width="570.800" height="394.600" fill="none" stroke="#d0222c" stroke-width="1.100"/>
    </svg>
  </div>
  <div id="vscroll">
    <svg class="abs" style="left:3px;top:6px" width="8" height="5" viewBox="0 0 8 5"><path d="M0.700 4.200 L4 1 L7.300 4.200" fill="none" stroke="#b4b4b4" stroke-width="1.100"/></svg>
    <svg class="abs" style="left:3.500px;top:461px" width="8" height="5" viewBox="0 0 8 5"><path d="M0.700 0.800 L4 4 L7.300 0.800" fill="none" stroke="#b4b4b4" stroke-width="1.100"/></svg>
    <div class="abs" style="left:1px;top:225px;width:12px;height:21px;border-radius:6px;background:#646464"></div>
  </div>
  <div id="statusbar">
    <div class="abs" style="left:3px;top:2px;width:42px;height:12px;background:#454545"></div>
    <div class="abs" style="left:5px;top:1.500px;height:14px;line-height:14px;font-size:10.500px;color:#dcdcdc;font-family:'Liberation Mono',monospace;letter-spacing:-1.300px">66.67%</div>
    <div class="abs" style="left:45px;top:1.500px;width:14px;height:13px;border:1px solid #464646;border-radius:2px"></div>
    <svg class="abs" style="left:48px;top:6.500px" width="8" height="5" viewBox="0 0 8 5"><path d="M0.700 0.700 L4 4 L7.300 0.700" fill="none" stroke="#e0e0e0" stroke-width="1.300"/></svg>
    <svg class="abs" style="left:67px;top:4.500px" width="8" height="8" viewBox="0 0 8 8"><path d="M1 0.500 V7.500" stroke="#7a7a7a" stroke-width="1.200"/><path d="M7.500 0.500 L2.500 4 L7.500 7.500 Z" fill="#7a7a7a"/></svg>
    <svg class="abs" style="left:82px;top:4.500px" width="6" height="8" viewBox="0 0 6 8"><path d="M5.500 0.500 L0.500 4 L5.500 7.500 Z" fill="#7a7a7a"/></svg>
    <div class="abs" style="left:95px;top:2px;width:33px;height:12px;background:#454545"></div>
    <div class="abs" style="left:97.5px;top:1.500px;height:14px;line-height:14px;font-size:10.500px;color:#dcdcdc;font-family:'Liberation Mono',monospace">1</div>
    <div class="abs" style="left:128px;top:1.500px;width:14px;height:13px;border:1px solid #464646;border-radius:2px"></div>
    <svg class="abs" style="left:131px;top:6.500px" width="8" height="5" viewBox="0 0 8 5"><path d="M0.700 0.700 L4 4 L7.300 0.700" fill="none" stroke="#e0e0e0" stroke-width="1.300"/></svg>
    <svg class="abs" style="left:150px;top:4.500px" width="6" height="8" viewBox="0 0 6 8"><path d="M0.500 0.500 L5.500 4 L0.500 7.500 Z" fill="#7a7a7a"/></svg>
    <svg class="abs" style="left:164px;top:4.500px" width="8" height="8" viewBox="0 0 8 8"><path d="M7 0.500 V7.500" stroke="#7a7a7a" stroke-width="1.200"/><path d="M0.500 0.500 L5.500 4 L0.500 7.500 Z" fill="#7a7a7a"/></svg>
    <div class="abs" style="left:178px;top:1px;width:1px;height:14px;background:#464646"></div>
    <div class="abs serif" style="left:252.5px;top:1.500px;height:14px;line-height:14px;font-size:10px;color:#c8c8c8;letter-spacing:0.300px">选择</div>
    <svg class="abs" style="left:350.5px;top:4.500px" width="6" height="8" viewBox="0 0 6 8"><path d="M0.500 0.300 L5.500 4 L0.500 7.700 Z" fill="#d0d0d0"/></svg>
    <div class="abs" style="left:359.5px;top:0;width:380.500px;height:16px;background:#4a4a4a"></div>
    <svg class="abs" style="left:365px;top:4.500px" width="5" height="8" viewBox="0 0 5 8"><path d="M4.200 0.700 L1 4 L4.200 7.300" fill="none" stroke="#b4b4b4" stroke-width="1.100"/></svg>
    <svg class="abs" style="left:731px;top:4.500px" width="5" height="8" viewBox="0 0 5 8"><path d="M0.800 0.700 L4 4 L0.800 7.300" fill="none" stroke="#b4b4b4" stroke-width="1.100"/></svg>
    <div class="abs" style="left:544px;top:4px;width:21px;height:8px;border-radius:4px;background:#616161"></div>
  </div>
  <div id="iconstrip">
    <div class="abs" style="left:0;top:0;width:33px;height:9px;background:#454545"></div>
    <svg class="abs" style="left:20px;top:2px" width="9" height="6" viewBox="0 0 9 6"><path d="M3 0.700 L0.700 3 L3 5.300 M7 0.700 L4.700 3 L7 5.300" fill="none" stroke="#d0d0d0" stroke-width="1.100"/></svg>
    <div class="abs" style="left:7px;top:12.5px;width:18px;height:3px;background:repeating-linear-gradient(90deg,#464646 0 1.300px,transparent 1.300px 2.300px)"></div>
    <svg class="abs" style="left:8.2px;top:22.5px" width="17" height="13" viewBox="0 0 17 13"><path d="M8.500 0.500 C 13 0.500, 16.500 3, 16.500 6.500 C 16.500 9, 14.500 9.500, 12.500 9 C 11 8.600, 10 9.500, 10.500 10.800 C 10.800 12, 9.800 12.500, 8 12.500 C 3.500 12.500, 0.500 10, 0.500 6.500 C 0.500 3, 4 0.500, 8.500 0.500 Z" fill="#d2d2d2"/><g fill="#535353"><circle cx="4" cy="7.500" r="1.300"/><circle cx="5.500" cy="4" r="1.300"/><circle cx="9" cy="3" r="1.300"/><circle cx="12.500" cy="4.500" r="1.300"/><circle cx="7" cy="10" r="1.200"/></g></svg>
    <svg class="abs" style="left:9.5px;top:45.0px" width="14" height="14" viewBox="0 0 14 14"><defs><linearGradient id="cgg" x1="1" y1="1" x2="0" y2="0"><stop offset="0" stop-color="#f4f4f4"/><stop offset="1" stop-color="#1a1a1a"/></linearGradient></defs><path d="M0.800 13.200 V0.800 C 7 1, 13 6, 13.200 13.200 Z" fill="url(#cgg)" stroke="#d2d2d2" stroke-width="1.200"/></svg>
    <svg class="abs" style="left:9.0px;top:69.7px" width="16" height="11" viewBox="0 0 16 11"><defs><linearGradient id="grg" x1="0" y1="0" x2="1" y2="0"><stop offset="0" stop-color="#2e2e2e"/><stop offset="1" stop-color="#f0f0f0"/></linearGradient></defs><rect x="0.700" y="0.700" width="14.600" height="9.600" rx="1" fill="url(#grg)" stroke="#d2d2d2" stroke-width="1.200"/></svg>
    <div class="abs" style="left:0;top:89.5px;width:33px;height:1px;background:#3e3e3e"></div>
    <div class="abs" style="left:7px;top:92.5px;width:18px;height:3px;background:repeating-linear-gradient(90deg,#464646 0 1.300px,transparent 1.300px 2.300px)"></div>
    <svg class="abs" style="left:9.5px;top:103.5px" width="15" height="11" viewBox="0 0 15 11"><rect x="0.300" y="0.300" width="14.400" height="10.400" rx="0.800" fill="#d2d2d2"/><g fill="#535353"><rect x="1.600" y="1.600" width="3.300" height="3.300"/><rect x="5.900" y="1.600" width="3.300" height="3.300"/><rect x="10.100" y="1.600" width="3.300" height="3.300"/><rect x="1.600" y="6" width="3.300" height="3.300" opacity="0.500"/><rect x="5.900" y="6" width="3.300" height="3.300" opacity="0.500"/><rect x="10.100" y="6" width="3.300" height="3.300" opacity="0.500"/></g></svg>
    <div class="abs" style="left:0;top:123.0px;width:33px;height:1px;background:#3e3e3e"></div>
    <div class="abs" style="left:7px;top:126.5px;width:18px;height:3px;background:repeating-linear-gradient(90deg,#464646 0 1.300px,transparent 1.300px 2.300px)"></div>
    <svg class="abs" style="left:10.0px;top:136.0px" width="14" height="16" viewBox="0 0 14 16"><rect x="3" y="9" width="8" height="6.500" fill="#d2d2d2"/><path d="M5 9 L4.200 4.500 L5 0.500 L6.200 4.500 L6 9 Z" fill="#d2d2d2"/><path d="M7 9 L8.500 4.500 C 8 3, 9.500 1.800, 11 2.500 C 12.500 3.200, 12 5, 10.500 5 L 8.500 9 Z" fill="#d2d2d2"/><path d="M4.500 9 L1.500 5 L2 3.500 L3.200 4 L5.500 9 Z" fill="#d2d2d2"/></svg>
    <svg class="abs" style="left:9.5px;top:159.0px" width="15" height="15" viewBox="0 0 15 15"><circle cx="7.500" cy="4" r="3.500" fill="#d2d2d2"/><circle cx="3.800" cy="8.500" r="3.500" fill="#d2d2d2"/><circle cx="11.200" cy="8.500" r="3.500" fill="#d2d2d2"/><path d="M7.500 7 C 7.500 11, 7 13, 5 14.500 H10 C 8 13, 7.500 11, 7.500 7 Z" fill="#d2d2d2"/><rect x="6" y="6" width="3" height="4" fill="#d2d2d2"/></svg>
    <div class="abs" style="left:0;top:181.5px;width:33px;height:1px;background:#3e3e3e"></div>
    <div class="abs" style="left:7px;top:184.5px;width:18px;height:3px;background:repeating-linear-gradient(90deg,#464646 0 1.300px,transparent 1.300px 2.300px)"></div>
    <svg class="abs" style="left:10.0px;top:194.0px" width="14" height="14" viewBox="0 0 14 14"><rect x="0.500" y="0.500" width="8" height="8" fill="#d2d2d2"/><rect x="5" y="5" width="8.500" height="8.500" fill="#d2d2d2" stroke="#535353" stroke-width="1"/></svg>
    <svg class="abs" style="left:10.0px;top:217.0px" width="14" height="14" viewBox="0 0 14 14"><rect x="2.500" y="2.500" width="9" height="9" fill="none" stroke="#d2d2d2" stroke-width="1.200" stroke-dasharray="1.500 1"/><g fill="#d2d2d2"><rect x="0" y="0" width="3.200" height="3.200"/><rect x="10.800" y="0" width="3.200" height="3.200"/><rect x="0" y="10.800" width="3.200" height="3.200"/><rect x="10.800" y="10.800" width="3.200" height="3.200"/><rect x="6" y="6" width="2" height="2"/></g></svg>
    <svg class="abs" style="left:10.0px;top:240.5px" width="14" height="14" viewBox="0 0 14 14"><rect x="0.500" y="0" width="1.500" height="14" fill="#d2d2d2"/><rect x="3.200" y="2" width="6.500" height="4" fill="#d2d2d2"/><rect x="3.200" y="8" width="10.300" height="4" fill="#d2d2d2"/></svg>
    <div class="abs" style="left:0;top:262.0px;width:33px;height:1px;background:#3e3e3e"></div>
    <div class="abs" style="left:7px;top:264.5px;width:18px;height:3px;background:repeating-linear-gradient(90deg,#464646 0 1.300px,transparent 1.300px 2.300px)"></div>
    <svg class="abs" style="left:8.5px;top:274.0px" width="16" height="15" viewBox="0 0 16 15"><rect x="0.700" y="0.700" width="9.500" height="10" rx="1.200" fill="none" stroke="#d2d2d2" stroke-width="1.300"/><rect x="5" y="5.500" width="10.300" height="8.800" rx="1.200" fill="#535353" stroke="#d2d2d2" stroke-width="1.300"/></svg>
    <svg class="abs" style="left:9.5px;top:297.5px" width="15" height="15" viewBox="0 0 15 15"><path d="M6 1.500 H1 V14 H13.500 V9" fill="none" stroke="#d2d2d2" stroke-width="1.700"/><path d="M6.500 8.500 L13.500 1.500 M8.500 1 H14 V6.500" fill="none" stroke="#d2d2d2" stroke-width="1.700"/></svg>
    <div class="abs" style="left:0;top:319.0px;width:33px;height:1px;background:#3e3e3e"></div>
    <div class="abs" style="left:7px;top:322.0px;width:18px;height:3px;background:repeating-linear-gradient(90deg,#464646 0 1.300px,transparent 1.300px 2.300px)"></div>
    <div class="abs" style="left:9px;top:330px;font-size:15px;line-height:18px;color:#d2d2d2;font-family:'Liberation Sans',sans-serif">A</div><div class="abs" style="left:21.500px;top:331.5px;width:1.200px;height:15px;background:#d2d2d2"></div>
    <div class="abs" style="left:11px;top:352.5px;font-size:15px;line-height:18px;color:#d2d2d2;font-weight:bold;font-family:'Liberation Sans',sans-serif">¶</div>
    <div class="abs" style="left:10px;top:375.5px;font-size:17px;line-height:18px;color:#b5b5b5;font-style:italic;font-family:'Liberation Serif',serif">O</div>
    <div class="abs" style="left:0;top:399.5px;width:33px;height:1px;background:#3e3e3e"></div>
    <div class="abs" style="left:7px;top:402.5px;width:18px;height:3px;background:repeating-linear-gradient(90deg,#464646 0 1.300px,transparent 1.300px 2.300px)"></div>
    <svg class="abs" style="left:9.5px;top:412.0px" width="13" height="15" viewBox="0 0 13 15"><path d="M0.500 0.500 H8.500 L12.500 4.500 V14.500 H0.500 Z" fill="#d2d2d2"/><path d="M8.500 0.500 V4.500 H12.500" fill="none" stroke="#535353" stroke-width="1"/><circle cx="6.500" cy="9.500" r="3.300" fill="#535353"/><rect x="6" y="8.800" width="1.200" height="2.800" fill="#d2d2d2"/><circle cx="6.600" cy="7.700" r="0.700" fill="#d2d2d2"/></svg>
    <svg class="abs" style="left:9.0px;top:435.5px" width="14" height="14" viewBox="0 0 14 14"><rect x="1" y="2" width="12.500" height="11.500" fill="#d2d2d2"/><circle cx="8" cy="6.500" r="3.300" fill="#535353"/><circle cx="3.300" cy="3.500" r="3.300" fill="#d2d2d2" stroke="#535353" stroke-width="0.800"/></svg>
    <div class="abs" style="left:0;top:456.0px;width:33px;height:1px;background:#3e3e3e"></div>
  </div>
  <div id="panel">
    <div class="abs" style="left:0;top:0;width:209px;height:9px;background:#424242"></div>
    <svg class="abs" style="left:194px;top:2px" width="9" height="6" viewBox="0 0 9 6"><path d="M0.700 0.700 L3 3 L0.700 5.300 M4.700 0.700 L7 3 L4.700 5.300" fill="none" stroke="#d0d0d0" stroke-width="1.100"/></svg>
    <div class="abs" style="left:0;top:9px;width:209px;height:22px;background:#444"></div>
    <div class="abs" style="left:36px;top:9px;width:35px;height:22px;background:#535353"></div>
    <div class="abs" style="left:105px;top:9px;width:1px;height:22px;background:#3c3c3c"></div>
    <div class="abs" style="left:8px;top:13px;font-size:10.800px;color:#a9a9a9;line-height:14px">属性</div>
    <div class="abs" style="left:43px;top:13px;font-size:10.800px;color:#f0f0f0;line-height:14px">图层</div>
    <div class="abs" style="left:78px;top:13px;font-size:10.800px;color:#a9a9a9;line-height:14px">动作</div>
    <svg class="abs" style="left:195px;top:17px" width="9" height="8" viewBox="0 0 9 8"><path d="M0 1 H9 M0 4 H9 M0 7 H9" stroke="#c8c8c8" stroke-width="1.100"/></svg>
    <div class="abs" style="left:5px;top:36px;width:188px;height:1px;background:#484848"></div>
    <div class="abs" style="left:22px;top:37px;width:1px;height:454px;background:#484848"></div>
    <div class="abs" style="left:164px;top:37px;width:1px;height:454px;background:#484848"></div>
    <div class="abs" style="left:193px;top:37px;width:1px;height:454px;background:#484848"></div>
    <div class="abs" style="left:5px;top:37px;width:1px;height:454px;background:#484848"></div>
    <div class="row" style="top:37.00px"><svg class="eye" width="11" height="7" viewBox="0 0 11 7"><path d="M0.600 3.500 C 2.500 0.300, 8.500 0.300, 10.400 3.500 C 8.500 6.700, 2.500 6.700, 0.600 3.500 Z" fill="none" stroke="#d8d8d8" stroke-width="1.100"/><circle cx="5.500" cy="3.400" r="1.900" fill="#d8d8d8"/></svg><div class="cb" style="background:#f0640a"></div><svg class="cv" style="left:46px" width="5" height="8" viewBox="0 0 5 8"><path d="M0.800 0.800 L4 4 L0.800 7.200" fill="none" stroke="#e0e0e0" stroke-width="1.300"/></svg><div class="th" style="left:60.5px"><svg width="13" height="13" viewBox="0 0 13 13" style="display:block"><path d="M1 8 C 4 6, 8 5, 11.500 5.500 L 12 7 C 8 6.800, 4 7.300, 1 8.500 Z" fill="#3c2a25"/></svg></div><div class="nm" style="left:80px">图层 9</div><div class="tg"></div></div><div class="row" style="top:54.47px"><svg class="eye" width="11" height="7" viewBox="0 0 11 7"><path d="M0.600 3.500 C 2.500 0.300, 8.500 0.300, 10.400 3.500 C 8.500 6.700, 2.500 6.700, 0.600 3.500 Z" fill="none" stroke="#d8d8d8" stroke-width="1.100"/><circle cx="5.500" cy="3.400" r="1.900" fill="#d8d8d8"/></svg><div class="cb" style="background:#f04ce0"></div><svg class="cv" style="left:44.5px;top:6.500px" width="8" height="5" viewBox="0 0 8 5"><path d="M0.800 0.800 L4 4 L7.200 0.800" fill="none" stroke="#e0e0e0" stroke-width="1.300"/></svg><div class="th" style="left:60.5px"><svg width="13" height="13" viewBox="0 0 13 13" style="display:block"><path d="M2 6.500 L4 5.800 M9 5.800 L11 6.500" stroke="#3c2a25" stroke-width="0.900"/><path d="M2 8 H5 M8 8 H11" stroke="#6c4333" stroke-width="0.800"/><path d="M5.500 7 L6.500 5 L7.500 7" stroke="#6c4333" stroke-width="0.700" fill="none"/></svg></div><div class="nm" style="left:80px">面部</div><div class="tg"></div></div><div class="row" style="top:71.94px"><svg class="eye" width="11" height="7" viewBox="0 0 11 7"><path d="M0.600 3.500 C 2.500 0.300, 8.500 0.300, 10.400 3.500 C 8.500 6.700, 2.500 6.700, 0.600 3.500 Z" fill="none" stroke="#d8d8d8" stroke-width="1.100"/><circle cx="5.500" cy="3.400" r="1.900" fill="#d8d8d8"/></svg><div class="cb" style="background:#f5f03c"></div><svg class="cv" style="left:65.5px" width="5" height="8" viewBox="0 0 5 8"><path d="M0.800 0.800 L4 4 L0.800 7.200" fill="none" stroke="#e0e0e0" stroke-width="1.300"/></svg><div class="th" style="left:79.5px"><svg width="13" height="13" viewBox="0 0 13 13" style="display:block"><path d="M2 6.300 H4.200 M8.800 6.300 H11" stroke="#3c2a25" stroke-width="0.900"/></svg></div><div class="nm" style="left:99px">胡子</div><div class="tg"></div></div><div class="row" style="top:89.41px"><svg class="eye" width="11" height="7" viewBox="0 0 11 7"><path d="M0.600 3.500 C 2.500 0.300, 8.500 0.300, 10.400 3.500 C 8.500 6.700, 2.500 6.700, 0.600 3.500 Z" fill="none" stroke="#d8d8d8" stroke-width="1.100"/><circle cx="5.500" cy="3.400" r="1.900" fill="#d8d8d8"/></svg><div class="cb" style="background:#f5f03c"></div><div class="th" style="left:79.5px"><svg width="13" height="13" viewBox="0 0 13 13" style="display:block"><path d="M1 7.800 C 4 6, 8 5, 11.500 5 L 12 6.800 C 8 6.600, 4 7.300, 1 8.300 Z" fill="#3c2a25"/></svg></div><div class="nm" style="left:99px">&lt;路径&gt;</div><div class="tg"></div></div><div class="row" style="top:106.88px"><svg class="eye" width="11" height="7" viewBox="0 0 11 7"><path d="M0.600 3.500 C 2.500 0.300, 8.500 0.300, 10.400 3.500 C 8.500 6.700, 2.500 6.700, 0.600 3.500 Z" fill="none" stroke="#d8d8d8" stroke-width="1.100"/><circle cx="5.500" cy="3.400" r="1.900" fill="#d8d8d8"/></svg><div class="cb" style="background:#f5f03c"></div><div class="th" style="left:79.5px"><svg width="13" height="13" viewBox="0 0 13 13" style="display:block"><path d="M12 7.800 C 9 6, 6 5.200, 2.500 5.200 C 5 6.600, 9 7.300, 12 8.300 Z" fill="#3c2a25"/></svg></div><div class="nm" style="left:99px">&lt;路径&gt;</div><div class="tg"></div></div><div class="row" style="top:124.35px"><svg class="eye" width="11" height="7" viewBox="0 0 11 7"><path d="M0.600 3.500 C 2.500 0.300, 8.500 0.300, 10.400 3.500 C 8.500 6.700, 2.500 6.700, 0.600 3.500 Z" fill="none" stroke="#d8d8d8" stroke-width="1.100"/><circle cx="5.500" cy="3.400" r="1.900" fill="#d8d8d8"/></svg><div class="cb" style="background:#3ce6f0"></div><svg class="cv" style="left:65.5px" width="5" height="8" viewBox="0 0 5 8"><path d="M0.800 0.800 L4 4 L0.800 7.200" fill="none" stroke="#e0e0e0" stroke-width="1.300"/></svg><div class="th" style="left:79.5px"><svg width="13" height="13" viewBox="0 0 13 13" style="display:block"><path d="M2 6.500 L4.200 6 M8.800 6 L11 6.500" stroke="#3c2a25" stroke-width="0.800"/></svg></div><div class="nm" style="left:99px">眉</div><div class="tg"></div></div><div class="row" style="top:141.82px"><svg class="eye" width="11" height="7" viewBox="0 0 11 7"><path d="M0.600 3.500 C 2.500 0.300, 8.500 0.300, 10.400 3.500 C 8.500 6.700, 2.500 6.700, 0.600 3.500 Z" fill="none" stroke="#d8d8d8" stroke-width="1.100"/><circle cx="5.500" cy="3.400" r="1.900" fill="#d8d8d8"/></svg><div class="cb" style="background:#3ce6f0"></div><div class="th" style="left:79.5px"><svg width="13" height="13" viewBox="0 0 13 13" style="display:block"><path d="M1.500 5.500 C 4 8.500, 9 8.500, 11.500 5.500" stroke="#42210b" stroke-width="1.100" fill="none"/></svg></div><div class="nm" style="left:99px">&lt;路径&gt;</div><div class="tg"></div></div><div class="row" style="top:159.29px"><svg class="eye" width="11" height="7" viewBox="0 0 11 7"><path d="M0.600 3.500 C 2.500 0.300, 8.500 0.300, 10.400 3.500 C 8.500 6.700, 2.500 6.700, 0.600 3.500 Z" fill="none" stroke="#d8d8d8" stroke-width="1.100"/><circle cx="5.500" cy="3.400" r="1.900" fill="#d8d8d8"/></svg><div class="cb" style="background:#3ce6f0"></div><div class="th" style="left:79.5px"><svg width="13" height="13" viewBox="0 0 13 13" style="display:block"><path d="M4.500 0 V13 M8.800 0 V13" stroke="#5a2a12" stroke-width="1.300"/></svg></div><div class="nm" style="left:99px">&lt;路径&gt;</div><div class="tg"></div></div><div class="row" style="top:176.76px"><svg class="eye" width="11" height="7" viewBox="0 0 11 7"><path d="M0.600 3.500 C 2.500 0.300, 8.500 0.300, 10.400 3.500 C 8.500 6.700, 2.500 6.700, 0.600 3.500 Z" fill="none" stroke="#d8d8d8" stroke-width="1.100"/><circle cx="5.500" cy="3.400" r="1.900" fill="#d8d8d8"/></svg><div class="cb" style="background:#3ce6f0"></div><svg class="cv" style="left:65.5px" width="5" height="8" viewBox="0 0 5 8"><path d="M0.800 0.800 L4 4 L0.800 7.200" fill="none" stroke="#e0e0e0" stroke-width="1.300"/></svg><div class="th" style="left:79.5px"><svg width="13" height="13" viewBox="0 0 13 13" style="display:block"><rect width="13" height="13" fill="#4a4a4a"/><circle cx="6.500" cy="6.500" r="5.800" fill="#6c4333"/><circle cx="7" cy="6.800" r="3.300" fill="#42210b"/><circle cx="4.500" cy="4.500" r="1" fill="#fff"/></svg></div><div class="nm" style="left:99px">&lt;...</div><div class="tg"></div></div><div class="row" style="top:194.23px"><svg class="eye" width="11" height="7" viewBox="0 0 11 7"><path d="M0.600 3.500 C 2.500 0.300, 8.500 0.300, 10.400 3.500 C 8.500 6.700, 2.500 6.700, 0.600 3.500 Z" fill="none" stroke="#d8d8d8" stroke-width="1.100"/><circle cx="5.500" cy="3.400" r="1.900" fill="#d8d8d8"/></svg><div class="cb" style="background:#3ce6f0"></div><div class="th" style="left:79.5px"><svg width="13" height="13" viewBox="0 0 13 13" style="display:block"></svg></div><div class="nm" style="left:99px">&lt;路径&gt;</div><div class="tg"></div></div><div class="row" style="top:211.70px"><svg class="eye" width="11" height="7" viewBox="0 0 11 7"><path d="M0.600 3.500 C 2.500 0.300, 8.500 0.300, 10.400 3.500 C 8.500 6.700, 2.500 6.700, 0.600 3.500 Z" fill="none" stroke="#d8d8d8" stroke-width="1.100"/><circle cx="5.500" cy="3.400" r="1.900" fill="#d8d8d8"/></svg><div class="cb" style="background:#3ce6f0"></div><div class="th" style="left:79.5px"><svg width="13" height="13" viewBox="0 0 13 13" style="display:block"><circle cx="6.500" cy="6.500" r="6.300" fill="#000"/></svg></div><div class="nm" style="left:99px">&lt;路径&gt;</div><div class="tg"></div></div><div class="row" style="top:229.17px"><svg class="eye" width="11" height="7" viewBox="0 0 11 7"><path d="M0.600 3.500 C 2.500 0.300, 8.500 0.300, 10.400 3.500 C 8.500 6.700, 2.500 6.700, 0.600 3.500 Z" fill="none" stroke="#d8d8d8" stroke-width="1.100"/><circle cx="5.500" cy="3.400" r="1.900" fill="#d8d8d8"/></svg><div class="cb" style="background:#3ce6f0"></div><svg class="cv" style="left:65.5px" width="5" height="8" viewBox="0 0 5 8"><path d="M0.800 0.800 L4 4 L0.800 7.200" fill="none" stroke="#e0e0e0" stroke-width="1.300"/></svg><div class="th" style="left:79.5px"><svg width="13" height="13" viewBox="0 0 13 13" style="display:block"><rect width="13" height="13" fill="#4a4a4a"/><circle cx="6.500" cy="6.500" r="5.800" fill="#6c4333"/><circle cx="7" cy="6.800" r="3.300" fill="#42210b"/><circle cx="4.500" cy="4.500" r="1" fill="#fff"/></svg></div><div class="nm" style="left:99px">&lt;...</div><div class="tg"></div></div><div class="row" style="top:246.64px"><svg class="eye" width="11" height="7" viewBox="0 0 11 7"><path d="M0.600 3.500 C 2.500 0.300, 8.500 0.300, 10.400 3.500 C 8.500 6.700, 2.500 6.700, 0.600 3.500 Z" fill="none" stroke="#d8d8d8" stroke-width="1.100"/><circle cx="5.500" cy="3.400" r="1.900" fill="#d8d8d8"/></svg><div class="cb" style="background:#3ce6f0"></div><div class="th" style="left:79.5px"><svg width="13" height="13" viewBox="0 0 13 13" style="display:block"></svg></div><div class="nm" style="left:99px">&lt;路径&gt;</div><div class="tg"></div></div><div class="row" style="top:264.11px"><svg class="eye" width="11" height="7" viewBox="0 0 11 7"><path d="M0.600 3.500 C 2.500 0.300, 8.500 0.300, 10.400 3.500 C 8.500 6.700, 2.500 6.700, 0.600 3.500 Z" fill="none" stroke="#d8d8d8" stroke-width="1.100"/><circle cx="5.500" cy="3.400" r="1.900" fill="#d8d8d8"/></svg><div class="cb" style="background:#3ce6f0"></div><div class="th" style="left:79.5px"><svg width="13" height="13" viewBox="0 0 13 13" style="display:block"><circle cx="6.500" cy="6.500" r="6.300" fill="#000"/></svg></div><div class="nm" style="left:99px">&lt;路径&gt;</div><div class="tg"></div></div><div class="row" style="top:281.58px"><svg class="eye" width="11" height="7" viewBox="0 0 11 7"><path d="M0.600 3.500 C 2.500 0.300, 8.500 0.300, 10.400 3.500 C 8.500 6.700, 2.500 6.700, 0.600 3.500 Z" fill="none" stroke="#d8d8d8" stroke-width="1.100"/><circle cx="5.500" cy="3.400" r="1.900" fill="#d8d8d8"/></svg><div class="cb" style="background:#3ce6f0"></div><div class="th" style="left:79.5px"><svg width="13" height="13" viewBox="0 0 13 13" style="display:block"><ellipse cx="6.500" cy="6.800" rx="6" ry="5" fill="#42210b"/></svg></div><div class="nm" style="left:99px">&lt;路径&gt;</div><div class="tg"></div></div><div class="row" style="top:299.05px"><svg class="eye" width="11" height="7" viewBox="0 0 11 7"><path d="M0.600 3.500 C 2.500 0.300, 8.500 0.300, 10.400 3.500 C 8.500 6.700, 2.500 6.700, 0.600 3.500 Z" fill="none" stroke="#d8d8d8" stroke-width="1.100"/><circle cx="5.500" cy="3.400" r="1.900" fill="#d8d8d8"/></svg><div class="cb" style="background:#46e04a"></div><svg class="cv" style="left:44.5px;top:6.500px" width="8" height="5" viewBox="0 0 8 5"><path d="M0.800 0.800 L4 4 L7.200 0.800" fill="none" stroke="#e0e0e0" stroke-width="1.300"/></svg><div class="th" style="left:60.5px"><svg width="13" height="13" viewBox="0 0 13 13" style="display:block"><rect width="13" height="13" fill="#fff"/><ellipse cx="3" cy="5" rx="2.600" ry="3" fill="#0c8cf2"/><ellipse cx="10" cy="5" rx="2.600" ry="3" fill="#0c8cf2"/><ellipse cx="3" cy="5" rx="1.500" ry="1.900" fill="#e0a19b"/><ellipse cx="10" cy="5" rx="1.500" ry="1.900" fill="#e0a19b"/><ellipse cx="6.500" cy="6" rx="3.400" ry="3" fill="#04b0fc"/><rect x="5" y="8.500" width="3" height="3" fill="#04b0fc"/></svg></div><div class="nm" style="left:80px">上身</div><div class="tg"></div></div><div class="row" style="top:316.52px"><svg class="eye" width="11" height="7" viewBox="0 0 11 7"><path d="M0.600 3.500 C 2.500 0.300, 8.500 0.300, 10.400 3.500 C 8.500 6.700, 2.500 6.700, 0.600 3.500 Z" fill="none" stroke="#d8d8d8" stroke-width="1.100"/><circle cx="5.500" cy="3.400" r="1.900" fill="#d8d8d8"/></svg><div class="cb" style="background:#46e04a"></div><div class="th" style="left:79.5px"><svg width="13" height="13" viewBox="0 0 13 13" style="display:block"><rect x="1.500" y="1.500" width="10" height="10" rx="3" fill="#f6c4c6"/></svg></div><div class="nm" style="left:99px">腮红</div><div class="tg f"></div></div><div class="row" style="top:333.99px"><svg class="eye" width="11" height="7" viewBox="0 0 11 7"><path d="M0.600 3.500 C 2.500 0.300, 8.500 0.300, 10.400 3.500 C 8.500 6.700, 2.500 6.700, 0.600 3.500 Z" fill="none" stroke="#d8d8d8" stroke-width="1.100"/><circle cx="5.500" cy="3.400" r="1.900" fill="#d8d8d8"/></svg><div class="cb" style="background:#46e04a"></div><div class="th" style="left:79.5px"><svg width="13" height="13" viewBox="0 0 13 13" style="display:block"><rect x="1.500" y="1.500" width="10" height="10" rx="3" fill="#f6c4c6"/></svg></div><div class="nm" style="left:99px">腮红</div><div class="tg f"></div></div><div class="row" style="top:351.46px"><svg class="eye" width="11" height="7" viewBox="0 0 11 7"><path d="M0.600 3.500 C 2.500 0.300, 8.500 0.300, 10.400 3.500 C 8.500 6.700, 2.500 6.700, 0.600 3.500 Z" fill="none" stroke="#d8d8d8" stroke-width="1.100"/><circle cx="5.500" cy="3.400" r="1.900" fill="#d8d8d8"/></svg><div class="cb" style="background:#46e04a"></div><div class="th" style="left:79.5px"><svg width="13" height="13" viewBox="0 0 13 13" style="display:block"><path d="M2 10 C 3 7, 4 5, 5 3 C 5 6, 4.500 8, 4 9.500 C 6 8, 9 6.500, 11 6 C 9 7.500, 6 9, 3 10.500 Z" fill="#2a90e0"/></svg></div><div class="nm" style="left:99px">头发</div><div class="tg"></div></div><div class="row" style="top:368.93px"><svg class="eye" width="11" height="7" viewBox="0 0 11 7"><path d="M0.600 3.500 C 2.500 0.300, 8.500 0.300, 10.400 3.500 C 8.500 6.700, 2.500 6.700, 0.600 3.500 Z" fill="none" stroke="#d8d8d8" stroke-width="1.100"/><circle cx="5.500" cy="3.400" r="1.900" fill="#d8d8d8"/></svg><div class="cb" style="background:#46e04a"></div><div class="th" style="left:79.5px"><svg width="13" height="13" viewBox="0 0 13 13" style="display:block"><path d="M11.500 1.500 C 8 3.500, 3 4, 2.500 6 C 3 7.500, 11 5, 10.500 7.500 C 10 10, 4 10.500, 1.500 12" fill="none" stroke="#0e8cf0" stroke-width="2.400"/></svg></div><div class="nm" style="left:99px">&lt;路径&gt;</div><div class="tg"></div></div><div class="row" style="top:386.40px"><svg class="eye" width="11" height="7" viewBox="0 0 11 7"><path d="M0.600 3.500 C 2.500 0.300, 8.500 0.300, 10.400 3.500 C 8.500 6.700, 2.500 6.700, 0.600 3.500 Z" fill="none" stroke="#d8d8d8" stroke-width="1.100"/><circle cx="5.500" cy="3.400" r="1.900" fill="#d8d8d8"/></svg><div class="cb" style="background:#46e04a"></div><div class="th" style="left:79.5px"><svg width="13" height="13" viewBox="0 0 13 13" style="display:block"><ellipse cx="6.500" cy="7" rx="5.200" ry="2.800" fill="#f3dccb"/></svg></div><div class="nm" style="left:99px">脸</div><div class="tg"></div></div><div class="row" style="top:403.87px"><svg class="eye" width="11" height="7" viewBox="0 0 11 7"><path d="M0.600 3.500 C 2.500 0.300, 8.500 0.300, 10.400 3.500 C 8.500 6.700, 2.500 6.700, 0.600 3.500 Z" fill="none" stroke="#d8d8d8" stroke-width="1.100"/><circle cx="5.500" cy="3.400" r="1.900" fill="#d8d8d8"/></svg><svg class="abs" style="left:22px;top:3.500px" width="8" height="10" viewBox="0 0 8 10"><path d="M2 4.500 V2.800 A2 2 0 0 1 6 2.800 V4.500" fill="none" stroke="#d8d8d8" stroke-width="1.200"/><rect x="0.800" y="4.200" width="6.400" height="5.300" rx="0.800" fill="#d8d8d8"/></svg><div class="cb" style="background:#46e04a"></div><div class="th" style="left:79.5px"><svg width="13" height="13" viewBox="0 0 13 13" style="display:block"></svg></div><div class="nm" style="left:99px">参考线</div><div class="tg"></div></div><div class="row" style="top:421.34px"><div class="cb" style="background:#46e04a"></div><div class="th" style="left:79.5px"><svg width="13" height="13" viewBox="0 0 13 13" style="display:block"><path d="M0.500 9 C 0.500 4, 3 1, 6.500 1 C 10 1, 12.500 4, 12.500 9 C 11 12, 2 12, 0.500 9 Z" fill="#04a8fc"/></svg></div><div class="nm" style="left:99px">脸</div><div class="tg f"></div></div><div class="row" style="top:438.81px"><svg class="eye" width="11" height="7" viewBox="0 0 11 7"><path d="M0.600 3.500 C 2.500 0.300, 8.500 0.300, 10.400 3.500 C 8.500 6.700, 2.500 6.700, 0.600 3.500 Z" fill="none" stroke="#d8d8d8" stroke-width="1.100"/><circle cx="5.500" cy="3.400" r="1.900" fill="#d8d8d8"/></svg><div class="cb" style="background:#46e04a"></div><div class="th" style="left:79.5px"><svg width="13" height="13" viewBox="0 0 13 13" style="display:block"><path d="M0.800 8 C 0.800 3, 3 1.200, 6.500 1.200 C 10 1.200, 12.200 3, 12.200 8 L 12.200 12 L 0.800 12 Z" fill="#04a8fc"/></svg></div><div class="nm" style="left:99px">头</div><div class="tg f"></div></div><div class="row" style="top:456.28px"><svg class="eye" width="11" height="7" viewBox="0 0 11 7"><path d="M0.600 3.500 C 2.500 0.300, 8.500 0.300, 10.400 3.500 C 8.500 6.700, 2.500 6.700, 0.600 3.500 Z" fill="none" stroke="#d8d8d8" stroke-width="1.100"/><circle cx="5.500" cy="3.400" r="1.900" fill="#d8d8d8"/></svg><div class="cb" style="background:#46e04a"></div><svg class="cv" style="left:65.5px" width="5" height="8" viewBox="0 0 5 8"><path d="M0.800 0.800 L4 4 L0.800 7.200" fill="none" stroke="#e0e0e0" stroke-width="1.300"/></svg><div class="th" style="left:79.5px"><svg width="13" height="13" viewBox="0 0 13 13" style="display:block"><ellipse cx="2.800" cy="6.500" rx="2.500" ry="3" fill="#0c8cf2"/><ellipse cx="10.200" cy="6.500" rx="2.500" ry="3" fill="#0c8cf2"/><ellipse cx="2.800" cy="6.500" rx="1.400" ry="1.900" fill="#e0a19b"/><ellipse cx="10.200" cy="6.500" rx="1.400" ry="1.900" fill="#e0a19b"/></svg></div><div class="nm" style="left:99px">耳</div><div class="tg"></div></div><div class="row" style="top:473.75px"><svg class="eye" width="11" height="7" viewBox="0 0 11 7"><path d="M0.600 3.500 C 2.500 0.300, 8.500 0.300, 10.400 3.500 C 8.500 6.700, 2.500 6.700, 0.600 3.500 Z" fill="none" stroke="#d8d8d8" stroke-width="1.100"/><circle cx="5.500" cy="3.400" r="1.900" fill="#d8d8d8"/></svg><div class="cb" style="background:#46e04a"></div><div class="th" style="left:79.5px"><svg width="13" height="13" viewBox="0 0 13 13" style="display:block"><path d="M0.500 12.500 L0.500 5 C 1 2, 4 0.500, 6.500 0.500 C 9.500 0.500, 12 2.500, 12.500 5 L 12.500 12.500 Z" fill="#04a8fc"/></svg></div><div class="nm" style="left:99px">&lt;路径&gt;</div><div class="tg"></div></div>
    <div class="abs" style="left:22px;top:37px;width:1px;height:454px;background:#484848"></div>
    <div class="abs" style="left:164px;top:37px;width:1px;height:454px;background:#484848"></div>
    <div class="abs" style="left:194px;top:37px;width:10px;height:454px;background:#4b4b4b"></div>
    <div class="abs" style="left:196px;top:47px;width:7px;height:365px;background:#646464;border-radius:3.500px"></div>
    <svg class="abs" style="left:196px;top:39px" width="7" height="5" viewBox="0 0 7 5"><path d="M0.600 4.200 L3.500 1 L6.400 4.200" fill="none" stroke="#c0c0c0" stroke-width="1.100"/></svg>
    <svg class="abs" style="left:196px;top:483px" width="7" height="5" viewBox="0 0 7 5"><path d="M0.600 0.800 L3.500 4 L6.400 0.800" fill="none" stroke="#c0c0c0" stroke-width="1.100"/></svg>
    <div class="abs" style="left:0;top:491px;width:209px;height:1px;background:#444"></div>
    <div class="abs serif" style="left:5px;top:494px;font-size:10.600px;line-height:14px;color:#d0d0d0;letter-spacing:0.400px">6 图层</div>
    <svg class="abs" style="left:68px;top:495px" width="11" height="11" viewBox="0 0 11 11"><path d="M4 1 H1 V10 H10 V7" fill="none" stroke="#d0d0d0" stroke-width="1.200"/><path d="M5 6 L10 1 M6.500 0.700 H10.300 V4.500" fill="none" stroke="#d0d0d0" stroke-width="1.200"/></svg>
    <svg class="abs" style="left:90px;top:496px" width="10" height="10" viewBox="0 0 10 10"><circle cx="4" cy="4" r="3" fill="none" stroke="#6e6e6e" stroke-width="1.100"/><path d="M6.200 6.200 L9.400 9.400" stroke="#6e6e6e" stroke-width="1.300"/></svg>
    <svg class="abs" style="left:110px;top:495px" width="11" height="11" viewBox="0 0 11 11"><rect x="0.600" y="0.600" width="7" height="7" rx="1" fill="none" stroke="#d0d0d0" stroke-width="1.100"/><rect x="3.500" y="3.500" width="7" height="7" rx="1" fill="#d0d0d0"/><circle cx="7" cy="7" r="1.800" fill="#535353"/></svg>
    <svg class="abs" style="left:130px;top:495px" width="14" height="11" viewBox="0 0 14 11"><path d="M0 1 H3 M1.500 1 V5 H4" fill="none" stroke="#d0d0d0" stroke-width="1.100"/><rect x="5.500" y="2.500" width="8" height="8" rx="1" fill="none" stroke="#d0d0d0" stroke-width="1.100"/><path d="M9.500 4.500 V8.500 M7.500 6.500 H11.500" stroke="#d0d0d0" stroke-width="1.100"/></svg>
    <svg class="abs" style="left:154px;top:495px" width="11" height="11" viewBox="0 0 11 11"><rect x="0.600" y="0.600" width="9.800" height="9.800" rx="1.200" fill="none" stroke="#d0d0d0" stroke-width="1.100"/><path d="M5.500 3 V8 M3 5.500 H8" stroke="#d0d0d0" stroke-width="1.100"/></svg>
    <svg class="abs" style="left:176px;top:494px" width="10" height="12" viewBox="0 0 10 12"><path d="M0.500 2.500 H9.500 M3.500 2.500 V0.800 H6.500 V2.500" fill="none" stroke="#d0d0d0" stroke-width="1.100"/><path d="M1.500 3.500 H8.500 V11.200 H1.500 Z" fill="none" stroke="#d0d0d0" stroke-width="1.100"/><path d="M4 5 V9.500 M6 5 V9.500" stroke="#d0d0d0" stroke-width="0.900"/></svg>
  </div>
</div>
<div class="abs" style="left:0;top:568px;width:1067px;height:3px;background:#222"></div>
<div id="taskbar">
  <svg class="abs" style="left:10px;top:9px" width="13" height="13" viewBox="0 0 13 13"><path d="M0 1.800 L5.800 1 V6.100 H0 Z M6.600 0.900 L13 0 V6.100 H6.600 Z M0 6.900 H5.800 V12 L0 11.200 Z M6.600 6.900 H13 V13 L6.600 12.100 Z" fill="#ffffff"/></svg>
  <div class="abs" style="left:33px;top:1px;width:239px;height:28px;background:#f2f2f2"></div>
  <svg class="abs" style="left:41px;top:8px" width="13" height="13" viewBox="0 0 13 13"><circle cx="8" cy="5" r="4" fill="none" stroke="#222" stroke-width="1.200"/><path d="M5.200 7.800 L0.800 12.200" stroke="#222" stroke-width="1.300"/></svg>
  <div class="abs" style="left:60.500px;top:7px;height:16px;line-height:16px;font-size:10.600px;color:#2a2a2a;white-space:nowrap">在这里输入你要搜索的内容</div>
  <div class="abs" style="left:283.5px;top:9.0px;width:11.500px;height:11.500px;border:2px solid #ffffff;border-radius:50%"></div>
  <svg class="abs" style="left:315.5px;top:9px" width="13" height="11" viewBox="0 0 13 11"><rect x="2.500" y="2.500" width="5.500" height="6" fill="none" stroke="#ffffff" stroke-width="1.200"/><path d="M0 0.600 H3 M7.500 0.600 H10.500 M0 10.400 H3 M7.500 10.400 H10.500" stroke="#ffffff" stroke-width="1.200"/><path d="M11.800 1 V3.500 M11.800 5 V10" stroke="#ffffff" stroke-width="1.400"/></svg>
  <svg class="abs" style="left:349.0px;top:6px" width="17" height="17" viewBox="0 0 17 17"><defs><linearGradient id="edg" x1="0" y1="0" x2="1" y2="1"><stop offset="0" stop-color="#35c1f1"/><stop offset="0.600" stop-color="#1b8ad8"/><stop offset="1" stop-color="#0c59a4"/></linearGradient></defs><circle cx="8.500" cy="8.500" r="8.200" fill="url(#edg)"/><path d="M1 8 C 2 3, 8 1, 12 3 C 15 4.500, 16.500 7.500, 15.500 10 C 14.500 12, 11 12, 10.500 10.500 C 11.500 9.500, 11 7, 8.500 6.500 C 5 6, 2.500 9, 4 13 C 1.500 12, 0.500 10, 1 8 Z" fill="#5fd45a" opacity="0.850"/><path d="M4 13 C 2.500 9, 5 6, 8.500 6.500 C 6.500 8, 6.500 12, 10 14.500 C 8 15.500, 5.500 15, 4 13 Z" fill="#0c4f9a"/></svg>
  <svg class="abs" style="left:383.5px;top:6px" width="17" height="17" viewBox="0 0 17 17"><circle cx="8.500" cy="8.500" r="8.200" fill="#e5433a"/><path d="M8.500 8.500 L1.400 4.400 A8.200 8.200 0 0 0 6 16.300 Z" fill="#2da94f"/><path d="M8.500 8.500 L6 16.300 A8.200 8.200 0 0 0 16.500 6.500 L 8.500 6.500 Z" fill="#fcc934"/><path d="M1.400 4.400 A8.200 8.200 0 0 1 16.300 6 L8.500 6 Z" fill="#e5433a"/><circle cx="8.500" cy="8.500" r="3.800" fill="#fff"/><circle cx="8.500" cy="8.500" r="3" fill="#4285f4"/></svg>
  <div class="abs" style="left:378px;top:27.500px;width:29px;height:1.500px;background:#76b9ed"></div>
  <svg class="abs" style="left:419.0px;top:6px" width="15" height="17" viewBox="0 0 15 17"><path d="M7.500 0.500 C 5 2, 2.500 2.500, 0.500 2.500 C 0.500 9, 2 14, 7.500 16.500 C 13 14, 14.500 9, 14.500 2.500 C 12.500 2.500, 10 2, 7.500 0.500 Z" fill="#f59b23"/><path d="M7.500 0.500 C 10 2, 12.500 2.500, 14.500 2.500 C 14.500 9, 13 14, 7.500 16.500 Z" fill="#f7b84a"/><path d="M8 4 C 10 6.500, 10.500 9, 9 12 C 7.500 12.500, 5.500 11.500, 5.500 9.500 C 5.500 7.500, 7.500 6.500, 8 4 Z" fill="#fff"/></svg>
  <svg class="abs" style="left:452.5px;top:7px" width="17" height="15" viewBox="0 0 17 15"><rect x="5" y="0.500" width="11.500" height="14" rx="1" fill="#2b7cd3"/><rect x="5" y="4" width="11.500" height="3.500" fill="#185abd"/><rect x="5" y="7.500" width="11.500" height="3.500" fill="#103f91"/><rect x="5" y="11" width="11.500" height="3.500" fill="#0a2f70"/><rect x="0.500" y="3" width="9" height="9" rx="1" fill="#185abd"/><text x="5" y="10.300" text-anchor="middle" font-family="Liberation Sans,sans-serif" font-weight="bold" font-size="7" fill="#fff">W</text></svg>
  <div class="abs" style="left:447px;top:27.500px;width:29px;height:1.500px;background:#76b9ed"></div>
  <svg class="abs" style="left:487.0px;top:7.5px" width="17" height="14" viewBox="0 0 17 14"><path d="M0.500 1 H6.500 L8 2.500 H16.500 V13.500 H0.500 Z" fill="#f6c445"/><rect x="0.500" y="4" width="16" height="9.500" fill="#fcd667"/><rect x="3.500" y="8.500" width="10" height="5" fill="#3c8fd8"/><rect x="5.500" y="10.500" width="6" height="3" fill="#fcd667"/></svg>
  <div class="abs" style="left:522px;top:7px;width:16px;height:15px;background:#001d34;border:1.300px solid #2fa3f7;border-radius:1.500px;color:#31a8ff;font-size:8.500px;font-weight:bold;line-height:12.500px;text-align:center;font-family:'Liberation Sans',sans-serif">Ps</div>
  <div class="abs" style="left:516px;top:27.500px;width:29px;height:1.500px;background:#76b9ed"></div>
  <svg class="abs" style="left:556.5px;top:6.5px" width="16" height="16" viewBox="0 0 16 16"><path d="M3 2.500 L15.500 0.500 V5 L3 7 Z" fill="#1d6fc4"/><rect x="0.500" y="4.500" width="13" height="11" rx="1" fill="#2b88d8"/><path d="M5 7 L10.500 10 L5 13 Z" fill="#fff"/></svg>
  <svg class="abs" style="left:591.0px;top:6px" width="17" height="17" viewBox="0 0 17 17"><circle cx="8.500" cy="8.500" r="8.200" fill="#ffffff"/><path d="M3.500 8 L13 4 L9.500 13.500 L8 9.500 Z" fill="#1a78e6"/></svg>
  <div class="abs" style="left:585px;top:27.500px;width:28px;height:1.500px;background:#76b9ed"></div>
  <svg class="abs" style="left:627.5px;top:5.5px" width="17" height="18" viewBox="0 0 17 18"><ellipse cx="8.500" cy="10" rx="8" ry="7.800" fill="#d9a13a"/><ellipse cx="8.500" cy="11.500" rx="5.500" ry="5" fill="#f1d38a"/><path d="M2 5 C 5 0.500, 12 0.500, 15 5 C 11 3.500, 6 3.500, 2 5 Z" fill="#5a3a1a"/><circle cx="5.800" cy="9" r="1.300" fill="#3a2410"/><circle cx="11.200" cy="9" r="1.300" fill="#3a2410"/><ellipse cx="8.500" cy="12.500" rx="2" ry="1.300" fill="#7a4a20"/></svg>
  <div class="abs" style="left:620px;top:27.500px;width:28px;height:1.500px;background:#76b9ed"></div>
  <svg class="abs" style="left:659px;top:7px" width="19" height="16" viewBox="0 0 19 16"><ellipse cx="7" cy="6" rx="6.500" ry="5.500" fill="#3cc24f"/><path d="M3 10 L2.500 13 L6 11 Z" fill="#3cc24f"/><ellipse cx="13" cy="10.500" rx="5" ry="4.300" fill="#e9e9e9"/><path d="M15 14 L16.500 15.800 L13 14.500 Z" fill="#e9e9e9"/><circle cx="11.300" cy="9.500" r="0.700" fill="#666"/><circle cx="14.700" cy="9.500" r="0.700" fill="#666"/></svg>
  <div class="abs" style="left:654px;top:27.500px;width:28px;height:1.500px;background:#76b9ed"></div>
  <div class="abs" style="left:686px;top:0;width:34px;height:29px;background:#3a444f"></div>
  <div class="abs" style="left:695.0px;top:7px;width:15px;height:15px;background:#300;border-radius:1.500px;color:#ff9a00;font-size:9px;font-weight:bold;line-height:15px;text-align:center;font-family:'Liberation Sans',sans-serif">Ai</div>
  <div class="abs" style="left:686px;top:27.500px;width:34px;height:1.500px;background:#8cc4f0"></div>
  <svg class="abs" style="left:797.0px;top:12px" width="9" height="6" viewBox="0 0 9 6"><path d="M0.700 5.200 L4.500 1 L8.300 5.200" fill="none" stroke="#ffffff" stroke-width="1.100"/></svg>
  <svg class="abs" style="left:812.5px;top:10px" width="13" height="10" viewBox="0 0 13 10"><ellipse cx="4.500" cy="3.800" rx="4.300" ry="3.600" fill="#4fd06a"/><ellipse cx="8.800" cy="6.300" rx="3.800" ry="3.200" fill="#d8f0dc"/></svg>
  <svg class="abs" style="left:829px;top:11px" width="13" height="8" viewBox="0 0 13 8"><rect x="2.500" y="0.500" width="10" height="6.500" rx="0.800" fill="#ffffff"/><path d="M0.500 1.500 H2.500 M0.500 3.500 H2.500" stroke="#ffffff" stroke-width="1"/></svg>
  <svg class="abs" style="left:846.5px;top:9.5px" width="11" height="11" viewBox="0 0 11 11"><path d="M10.500 10.500 L10.500 9.500 M1 10.500 A9.500 9.500 0 0 1 10.500 1" fill="none" stroke="#9a9a9a" stroke-width="1"/><path d="M4 10.500 A6.500 6.500 0 0 1 10.500 4 M7 10.500 A3.500 3.500 0 0 1 10.500 7" fill="none" stroke="#ffffff" stroke-width="1.100"/><circle cx="10" cy="10" r="0.900" fill="#ffffff"/></svg>
  <svg class="abs" style="left:862px;top:9.5px" width="13" height="11" viewBox="0 0 13 11"><path d="M0.700 3.800 H2.800 L5.500 1 V10 L2.800 7.200 H0.700 Z" fill="none" stroke="#ffffff" stroke-width="1"/><path d="M7.500 3.500 C 8.500 4.500, 8.500 6.500, 7.500 7.500 M9.300 2 C 11 4, 11 7, 9.300 9 M11 0.800 C 13.300 3.500, 13.300 7.500, 11 10.200" fill="none" stroke="#ffffff" stroke-width="0.900"/></svg>
  <svg class="abs" style="left:879.5px;top:9px" width="10" height="12" viewBox="0 0 10 12"><ellipse cx="5" cy="6" rx="3.600" ry="5" fill="#151515"/><ellipse cx="5" cy="7.800" rx="2.300" ry="2.800" fill="#f0f0f0"/><path d="M1.500 5.500 C 3.500 7, 6.500 7, 8.500 5.500 L 8.500 7 C 6.500 8, 3.500 8, 1.500 7 Z" fill="#e03a2e"/><ellipse cx="5" cy="11.300" rx="3.800" ry="0.800" fill="#f0a020"/></svg>
  <svg class="abs" style="left:898px;top:9.5px" width="12" height="12" viewBox="0 0 12 12"><path d="M5 7 C 3.500 5.500, 4 3.500, 5.500 2.500 C 7 1, 9.500 0.800, 10.500 2 C 11.500 3.300, 10.500 5, 9.500 5.500 M7 5 C 8.500 6.500, 8 8.500, 6.500 9.500 C 5 11, 2.500 11.200, 1.500 10 C 0.500 8.700, 1.500 7, 2.500 6.500" fill="none" stroke="#ffffff" stroke-width="1.200"/></svg>
  <svg class="abs" style="left:918.5px;top:10px" width="17" height="10" viewBox="0 0 17 10"><rect x="0.600" y="0.600" width="15.800" height="8.800" rx="1.200" fill="none" stroke="#ffffff" stroke-width="1"/><path d="M3 3 H14 M3 5 H14" stroke="#ffffff" stroke-width="0.900" stroke-dasharray="1 1"/><path d="M4.500 7.200 H12.500" stroke="#ffffff" stroke-width="0.900"/></svg>
  <div class="abs" style="left:940.0px;top:7px;font-size:11px;line-height:15px;color:#ffffff;font-weight:500">英</div>
  <div class="abs" style="left:960.0px;top:9.5px;width:11px;height:11px;background:#ffffff;color:#1c2733;font-size:8.500px;line-height:11px;text-align:center;font-weight:normal">拼</div>
  <div class="abs" style="left:974px;top:2px;width:60px;text-align:center;font-size:9.800px;line-height:12px;color:#ffffff;font-family:'Liberation Sans',sans-serif">16:07</div>
  <div class="abs" style="left:974px;top:14.5px;width:60px;text-align:center;font-size:9.800px;line-height:12px;color:#ffffff;font-family:'Liberation Sans',sans-serif">2021/2/17</div>
  <svg class="abs" style="left:1038px;top:9.5px" width="12" height="11" viewBox="0 0 12 11"><path d="M0.500 0.500 H10.500 V8 H4 L2 10 V8 H0.500 Z" fill="#ffffff"/><path d="M2.500 3 H8.500 M2.500 5 H8.500" stroke="#1c2733" stroke-width="0.800"/><circle cx="9.500" cy="8.300" r="2.300" fill="#ffffff" stroke="#1c2733" stroke-width="0.700"/><text x="9.500" y="10" font-size="4" text-anchor="middle" fill="#1c2733" font-family="Liberation Sans,sans-serif">3</text></svg>
</div>
</body>
</html>
